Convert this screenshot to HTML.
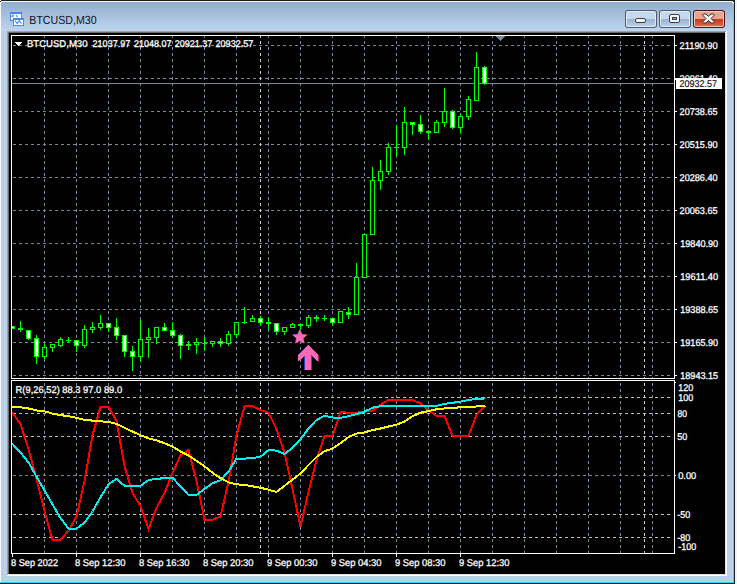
<!DOCTYPE html>
<html><head><meta charset="utf-8"><title>BTCUSD,M30</title>
<style>html,body{margin:0;padding:0;background:#fff;overflow:hidden}svg{display:block}
text{shape-rendering:auto}polygon{shape-rendering:geometricPrecision}polyline{shape-rendering:crispEdges}</style></head>
<body><svg width="737" height="584" viewBox="0 0 737 584" shape-rendering="crispEdges"><defs>
<linearGradient id="frameg" x1="0" y1="0" x2="0" y2="1" gradientUnits="objectBoundingBox">
<stop offset="0" stop-color="#96b1cf"/>
<stop offset="0.05" stop-color="#bbd3ed"/>
<stop offset="1" stop-color="#bbd1ea"/>
</linearGradient>
<linearGradient id="titleg" x1="0" y1="2" x2="0" y2="31" gradientUnits="userSpaceOnUse">
<stop offset="0" stop-color="#93aecc"/>
<stop offset="1" stop-color="#bdd5ef"/>
</linearGradient>
<linearGradient id="btnb" x1="0" y1="0" x2="0" y2="1">
<stop offset="0" stop-color="#98b1cf"/>
<stop offset="1" stop-color="#b8cee8"/>
</linearGradient>
<linearGradient id="btnr" x1="0" y1="0" x2="0" y2="1">
<stop offset="0" stop-color="#c0391a"/>
<stop offset="1" stop-color="#d9674a"/>
</linearGradient>
<clipPath id="indclip"><rect x="12" y="381" width="662" height="172"/></clipPath>
</defs><rect x="0" y="0" width="737" height="584" fill="#ffffff"/>
<path d="M0,3 Q0,0 3,0 L732,0 Q735,0 735,3 L735,584 L0,584 Z" fill="#1b1b1b"/>
<path d="M0,4 Q0,1 3,1 L731,1 Q734,1 734,4 L734,583 L0,583 Z" fill="#f4f8fc"/>
<path d="M1,4 Q1,2 4,2 L730,2 Q733,2 733,4 L733,582 L1,582 Z" fill="#35d3ef"/>
<path d="M1,4 Q1,2 4,2 L730,2 Q733,2 733,4 L733,582 L1,582 Z" fill="url(#frameg)"/>
<rect x="735" y="0" width="2" height="584" fill="#f4f4f4"/>
<rect x="734" y="0" width="1" height="583" fill="#1b1b1b"/>
<rect x="733" y="4" width="1" height="579" fill="#47d6f2"/>
<rect x="0" y="583" width="735" height="1" fill="#1b1b1b"/>
<rect x="0" y="582" width="734" height="1" fill="#2fd4ee"/>
<rect x="0" y="3" width="1" height="579" fill="#f6f9fd"/>
<rect x="1" y="31" width="6" height="551" fill="#b9d1ea"/>
<rect x="727" y="31" width="6" height="551" fill="#bcd0ea"/>
<rect x="1" y="576" width="732" height="6" fill="#bad0ea"/>
<path d="M1,4 Q1,2 4,2 L730,2 Q733,2 733,4 L733,31 L1,31 Z" fill="url(#titleg)"/>
<g>
<rect x="10" y="12" width="12" height="9" fill="#4a86ee"/>
<rect x="11" y="14" width="10" height="6" fill="#ffffff"/>
<path d="M11.5,17 L13,15.2 L14,16.5 M16,15.2 L17.5,17" stroke="#4a86ee" stroke-width="1.2" fill="none" shape-rendering="geometricPrecision"/>
<rect x="13" y="18" width="11" height="8" fill="#4a86ee"/>
<rect x="14" y="20" width="9" height="5" fill="#ffffff"/>
<path d="M15,20.6 L17.2,23.6 L19.2,20.6 L21.5,23.6" stroke="#4a86ee" stroke-width="1.1" fill="none" shape-rendering="geometricPrecision"/>
</g>
<text x="29.3" y="23.6" font-family='"Liberation Sans", sans-serif' font-size="11.8" text-rendering="geometricPrecision" fill="#10102a" textLength="67.3" lengthAdjust="spacingAndGlyphs">BTCUSD,M30</text>
<g shape-rendering="geometricPrecision"><rect x="625" y="10" width="32" height="18" rx="3" ry="3" fill="#4e5b6d"/><rect x="626" y="11" width="30" height="16" rx="2" ry="2" fill="#e3ecf7"/><rect x="627" y="12" width="28" height="7" fill="#c6d8ed"/><rect x="627" y="19" width="28" height="7" fill="url(#btnb)"/></g>
<g shape-rendering="geometricPrecision"><rect x="659" y="10" width="32" height="18" rx="3" ry="3" fill="#4e5b6d"/><rect x="660" y="11" width="30" height="16" rx="2" ry="2" fill="#e3ecf7"/><rect x="661" y="12" width="28" height="7" fill="#c6d8ed"/><rect x="661" y="19" width="28" height="7" fill="url(#btnb)"/></g>
<g shape-rendering="geometricPrecision"><rect x="693" y="10" width="32" height="18" rx="3" ry="3" fill="#4d1010"/><rect x="694" y="11" width="30" height="16" rx="2" ry="2" fill="#f3c9bb"/><rect x="695" y="12" width="28" height="7" fill="#e8a491"/><rect x="695" y="19" width="28" height="7" fill="url(#btnr)"/></g>
<g shape-rendering="geometricPrecision">
<rect x="635.5" y="18.5" width="10" height="4" rx="1.5" fill="#f4f4f4" stroke="#39414f" stroke-width="1"/>
<rect x="669.5" y="14.5" width="10" height="8" rx="1.5" fill="#f4f4f4" stroke="#39414f" stroke-width="1"/>
<rect x="672.5" y="17.5" width="4" height="2" fill="#8fa6c2" stroke="#39414f" stroke-width="1"/>
<path d="M703.5,14 L706,14 L708.5,16.5 L711,14 L713.5,14 L714.5,15 L711,18.5 L714.5,22 L713.5,23 L711,23 L708.5,20.5 L706,23 L703.5,23 L702.5,22 L706,18.5 L702.5,15 Z" fill="#fafafa" stroke="#3e2626" stroke-width="1" stroke-linejoin="round"/>
</g>
<rect x="7" y="31" width="720" height="545" fill="#ffffff"/>
<rect x="7" y="31" width="719" height="544" fill="#e3e3e3"/>
<rect x="7" y="31" width="719" height="1" fill="#a0a0a0"/>
<rect x="7" y="31" width="1" height="544" fill="#a0a0a0"/>
<rect x="8" y="32" width="717" height="542" fill="#696969"/>
<rect x="9" y="33" width="716" height="541" fill="#e3e3e3"/>
<rect x="9" y="33" width="716" height="541" fill="#000000"/>
<path d="M13,45.5H16M19,45.5H22M25,45.5H28M31,45.5H34M37,45.5H40M43,45.5H46M49,45.5H52M55,45.5H58M61,45.5H64M67,45.5H70M73,45.5H76M79,45.5H82M85,45.5H88M91,45.5H94M97,45.5H100M103,45.5H106M109,45.5H112M115,45.5H118M121,45.5H124M127,45.5H130M133,45.5H136M139,45.5H142M145,45.5H148M151,45.5H154M157,45.5H160M163,45.5H166M169,45.5H172M175,45.5H178M181,45.5H184M187,45.5H190M193,45.5H196M199,45.5H202M205,45.5H208M211,45.5H214M217,45.5H220M223,45.5H226M229,45.5H232M235,45.5H238M241,45.5H244M247,45.5H250M253,45.5H256M259,45.5H262M265,45.5H268M271,45.5H274M277,45.5H280M283,45.5H286M289,45.5H292M295,45.5H298M301,45.5H304M307,45.5H310M313,45.5H316M319,45.5H322M325,45.5H328M331,45.5H334M337,45.5H340M343,45.5H346M349,45.5H352M355,45.5H358M361,45.5H364M367,45.5H370M373,45.5H376M379,45.5H382M385,45.5H388M391,45.5H394M397,45.5H400M403,45.5H406M409,45.5H412M415,45.5H418M421,45.5H424M427,45.5H430M433,45.5H436M439,45.5H442M445,45.5H448M451,45.5H454M457,45.5H460M463,45.5H466M469,45.5H472M475,45.5H478M481,45.5H484M487,45.5H490M493,45.5H496M499,45.5H502M505,45.5H508M511,45.5H514M517,45.5H520M523,45.5H526M529,45.5H532M535,45.5H538M541,45.5H544M547,45.5H550M553,45.5H556M559,45.5H562M565,45.5H568M571,45.5H574M577,45.5H580M583,45.5H586M589,45.5H592M595,45.5H598M601,45.5H604M607,45.5H610M613,45.5H616M619,45.5H622M625,45.5H628M631,45.5H634M637,45.5H640M643,45.5H646M649,45.5H652M655,45.5H658M661,45.5H664M667,45.5H670" stroke="#778899" stroke-width="1" fill="none"/>
<path d="M13,78.5H16M19,78.5H22M25,78.5H28M31,78.5H34M37,78.5H40M43,78.5H46M49,78.5H52M55,78.5H58M61,78.5H64M67,78.5H70M73,78.5H76M79,78.5H82M85,78.5H88M91,78.5H94M97,78.5H100M103,78.5H106M109,78.5H112M115,78.5H118M121,78.5H124M127,78.5H130M133,78.5H136M139,78.5H142M145,78.5H148M151,78.5H154M157,78.5H160M163,78.5H166M169,78.5H172M175,78.5H178M181,78.5H184M187,78.5H190M193,78.5H196M199,78.5H202M205,78.5H208M211,78.5H214M217,78.5H220M223,78.5H226M229,78.5H232M235,78.5H238M241,78.5H244M247,78.5H250M253,78.5H256M259,78.5H262M265,78.5H268M271,78.5H274M277,78.5H280M283,78.5H286M289,78.5H292M295,78.5H298M301,78.5H304M307,78.5H310M313,78.5H316M319,78.5H322M325,78.5H328M331,78.5H334M337,78.5H340M343,78.5H346M349,78.5H352M355,78.5H358M361,78.5H364M367,78.5H370M373,78.5H376M379,78.5H382M385,78.5H388M391,78.5H394M397,78.5H400M403,78.5H406M409,78.5H412M415,78.5H418M421,78.5H424M427,78.5H430M433,78.5H436M439,78.5H442M445,78.5H448M451,78.5H454M457,78.5H460M463,78.5H466M469,78.5H472M475,78.5H478M481,78.5H484M487,78.5H490M493,78.5H496M499,78.5H502M505,78.5H508M511,78.5H514M517,78.5H520M523,78.5H526M529,78.5H532M535,78.5H538M541,78.5H544M547,78.5H550M553,78.5H556M559,78.5H562M565,78.5H568M571,78.5H574M577,78.5H580M583,78.5H586M589,78.5H592M595,78.5H598M601,78.5H604M607,78.5H610M613,78.5H616M619,78.5H622M625,78.5H628M631,78.5H634M637,78.5H640M643,78.5H646M649,78.5H652M655,78.5H658M661,78.5H664M667,78.5H670" stroke="#778899" stroke-width="1" fill="none"/>
<path d="M13,111.5H16M19,111.5H22M25,111.5H28M31,111.5H34M37,111.5H40M43,111.5H46M49,111.5H52M55,111.5H58M61,111.5H64M67,111.5H70M73,111.5H76M79,111.5H82M85,111.5H88M91,111.5H94M97,111.5H100M103,111.5H106M109,111.5H112M115,111.5H118M121,111.5H124M127,111.5H130M133,111.5H136M139,111.5H142M145,111.5H148M151,111.5H154M157,111.5H160M163,111.5H166M169,111.5H172M175,111.5H178M181,111.5H184M187,111.5H190M193,111.5H196M199,111.5H202M205,111.5H208M211,111.5H214M217,111.5H220M223,111.5H226M229,111.5H232M235,111.5H238M241,111.5H244M247,111.5H250M253,111.5H256M259,111.5H262M265,111.5H268M271,111.5H274M277,111.5H280M283,111.5H286M289,111.5H292M295,111.5H298M301,111.5H304M307,111.5H310M313,111.5H316M319,111.5H322M325,111.5H328M331,111.5H334M337,111.5H340M343,111.5H346M349,111.5H352M355,111.5H358M361,111.5H364M367,111.5H370M373,111.5H376M379,111.5H382M385,111.5H388M391,111.5H394M397,111.5H400M403,111.5H406M409,111.5H412M415,111.5H418M421,111.5H424M427,111.5H430M433,111.5H436M439,111.5H442M445,111.5H448M451,111.5H454M457,111.5H460M463,111.5H466M469,111.5H472M475,111.5H478M481,111.5H484M487,111.5H490M493,111.5H496M499,111.5H502M505,111.5H508M511,111.5H514M517,111.5H520M523,111.5H526M529,111.5H532M535,111.5H538M541,111.5H544M547,111.5H550M553,111.5H556M559,111.5H562M565,111.5H568M571,111.5H574M577,111.5H580M583,111.5H586M589,111.5H592M595,111.5H598M601,111.5H604M607,111.5H610M613,111.5H616M619,111.5H622M625,111.5H628M631,111.5H634M637,111.5H640M643,111.5H646M649,111.5H652M655,111.5H658M661,111.5H664M667,111.5H670" stroke="#778899" stroke-width="1" fill="none"/>
<path d="M13,144.5H16M19,144.5H22M25,144.5H28M31,144.5H34M37,144.5H40M43,144.5H46M49,144.5H52M55,144.5H58M61,144.5H64M67,144.5H70M73,144.5H76M79,144.5H82M85,144.5H88M91,144.5H94M97,144.5H100M103,144.5H106M109,144.5H112M115,144.5H118M121,144.5H124M127,144.5H130M133,144.5H136M139,144.5H142M145,144.5H148M151,144.5H154M157,144.5H160M163,144.5H166M169,144.5H172M175,144.5H178M181,144.5H184M187,144.5H190M193,144.5H196M199,144.5H202M205,144.5H208M211,144.5H214M217,144.5H220M223,144.5H226M229,144.5H232M235,144.5H238M241,144.5H244M247,144.5H250M253,144.5H256M259,144.5H262M265,144.5H268M271,144.5H274M277,144.5H280M283,144.5H286M289,144.5H292M295,144.5H298M301,144.5H304M307,144.5H310M313,144.5H316M319,144.5H322M325,144.5H328M331,144.5H334M337,144.5H340M343,144.5H346M349,144.5H352M355,144.5H358M361,144.5H364M367,144.5H370M373,144.5H376M379,144.5H382M385,144.5H388M391,144.5H394M397,144.5H400M403,144.5H406M409,144.5H412M415,144.5H418M421,144.5H424M427,144.5H430M433,144.5H436M439,144.5H442M445,144.5H448M451,144.5H454M457,144.5H460M463,144.5H466M469,144.5H472M475,144.5H478M481,144.5H484M487,144.5H490M493,144.5H496M499,144.5H502M505,144.5H508M511,144.5H514M517,144.5H520M523,144.5H526M529,144.5H532M535,144.5H538M541,144.5H544M547,144.5H550M553,144.5H556M559,144.5H562M565,144.5H568M571,144.5H574M577,144.5H580M583,144.5H586M589,144.5H592M595,144.5H598M601,144.5H604M607,144.5H610M613,144.5H616M619,144.5H622M625,144.5H628M631,144.5H634M637,144.5H640M643,144.5H646M649,144.5H652M655,144.5H658M661,144.5H664M667,144.5H670" stroke="#778899" stroke-width="1" fill="none"/>
<path d="M13,177.5H16M19,177.5H22M25,177.5H28M31,177.5H34M37,177.5H40M43,177.5H46M49,177.5H52M55,177.5H58M61,177.5H64M67,177.5H70M73,177.5H76M79,177.5H82M85,177.5H88M91,177.5H94M97,177.5H100M103,177.5H106M109,177.5H112M115,177.5H118M121,177.5H124M127,177.5H130M133,177.5H136M139,177.5H142M145,177.5H148M151,177.5H154M157,177.5H160M163,177.5H166M169,177.5H172M175,177.5H178M181,177.5H184M187,177.5H190M193,177.5H196M199,177.5H202M205,177.5H208M211,177.5H214M217,177.5H220M223,177.5H226M229,177.5H232M235,177.5H238M241,177.5H244M247,177.5H250M253,177.5H256M259,177.5H262M265,177.5H268M271,177.5H274M277,177.5H280M283,177.5H286M289,177.5H292M295,177.5H298M301,177.5H304M307,177.5H310M313,177.5H316M319,177.5H322M325,177.5H328M331,177.5H334M337,177.5H340M343,177.5H346M349,177.5H352M355,177.5H358M361,177.5H364M367,177.5H370M373,177.5H376M379,177.5H382M385,177.5H388M391,177.5H394M397,177.5H400M403,177.5H406M409,177.5H412M415,177.5H418M421,177.5H424M427,177.5H430M433,177.5H436M439,177.5H442M445,177.5H448M451,177.5H454M457,177.5H460M463,177.5H466M469,177.5H472M475,177.5H478M481,177.5H484M487,177.5H490M493,177.5H496M499,177.5H502M505,177.5H508M511,177.5H514M517,177.5H520M523,177.5H526M529,177.5H532M535,177.5H538M541,177.5H544M547,177.5H550M553,177.5H556M559,177.5H562M565,177.5H568M571,177.5H574M577,177.5H580M583,177.5H586M589,177.5H592M595,177.5H598M601,177.5H604M607,177.5H610M613,177.5H616M619,177.5H622M625,177.5H628M631,177.5H634M637,177.5H640M643,177.5H646M649,177.5H652M655,177.5H658M661,177.5H664M667,177.5H670" stroke="#778899" stroke-width="1" fill="none"/>
<path d="M13,210.5H16M19,210.5H22M25,210.5H28M31,210.5H34M37,210.5H40M43,210.5H46M49,210.5H52M55,210.5H58M61,210.5H64M67,210.5H70M73,210.5H76M79,210.5H82M85,210.5H88M91,210.5H94M97,210.5H100M103,210.5H106M109,210.5H112M115,210.5H118M121,210.5H124M127,210.5H130M133,210.5H136M139,210.5H142M145,210.5H148M151,210.5H154M157,210.5H160M163,210.5H166M169,210.5H172M175,210.5H178M181,210.5H184M187,210.5H190M193,210.5H196M199,210.5H202M205,210.5H208M211,210.5H214M217,210.5H220M223,210.5H226M229,210.5H232M235,210.5H238M241,210.5H244M247,210.5H250M253,210.5H256M259,210.5H262M265,210.5H268M271,210.5H274M277,210.5H280M283,210.5H286M289,210.5H292M295,210.5H298M301,210.5H304M307,210.5H310M313,210.5H316M319,210.5H322M325,210.5H328M331,210.5H334M337,210.5H340M343,210.5H346M349,210.5H352M355,210.5H358M361,210.5H364M367,210.5H370M373,210.5H376M379,210.5H382M385,210.5H388M391,210.5H394M397,210.5H400M403,210.5H406M409,210.5H412M415,210.5H418M421,210.5H424M427,210.5H430M433,210.5H436M439,210.5H442M445,210.5H448M451,210.5H454M457,210.5H460M463,210.5H466M469,210.5H472M475,210.5H478M481,210.5H484M487,210.5H490M493,210.5H496M499,210.5H502M505,210.5H508M511,210.5H514M517,210.5H520M523,210.5H526M529,210.5H532M535,210.5H538M541,210.5H544M547,210.5H550M553,210.5H556M559,210.5H562M565,210.5H568M571,210.5H574M577,210.5H580M583,210.5H586M589,210.5H592M595,210.5H598M601,210.5H604M607,210.5H610M613,210.5H616M619,210.5H622M625,210.5H628M631,210.5H634M637,210.5H640M643,210.5H646M649,210.5H652M655,210.5H658M661,210.5H664M667,210.5H670" stroke="#778899" stroke-width="1" fill="none"/>
<path d="M13,243.5H16M19,243.5H22M25,243.5H28M31,243.5H34M37,243.5H40M43,243.5H46M49,243.5H52M55,243.5H58M61,243.5H64M67,243.5H70M73,243.5H76M79,243.5H82M85,243.5H88M91,243.5H94M97,243.5H100M103,243.5H106M109,243.5H112M115,243.5H118M121,243.5H124M127,243.5H130M133,243.5H136M139,243.5H142M145,243.5H148M151,243.5H154M157,243.5H160M163,243.5H166M169,243.5H172M175,243.5H178M181,243.5H184M187,243.5H190M193,243.5H196M199,243.5H202M205,243.5H208M211,243.5H214M217,243.5H220M223,243.5H226M229,243.5H232M235,243.5H238M241,243.5H244M247,243.5H250M253,243.5H256M259,243.5H262M265,243.5H268M271,243.5H274M277,243.5H280M283,243.5H286M289,243.5H292M295,243.5H298M301,243.5H304M307,243.5H310M313,243.5H316M319,243.5H322M325,243.5H328M331,243.5H334M337,243.5H340M343,243.5H346M349,243.5H352M355,243.5H358M361,243.5H364M367,243.5H370M373,243.5H376M379,243.5H382M385,243.5H388M391,243.5H394M397,243.5H400M403,243.5H406M409,243.5H412M415,243.5H418M421,243.5H424M427,243.5H430M433,243.5H436M439,243.5H442M445,243.5H448M451,243.5H454M457,243.5H460M463,243.5H466M469,243.5H472M475,243.5H478M481,243.5H484M487,243.5H490M493,243.5H496M499,243.5H502M505,243.5H508M511,243.5H514M517,243.5H520M523,243.5H526M529,243.5H532M535,243.5H538M541,243.5H544M547,243.5H550M553,243.5H556M559,243.5H562M565,243.5H568M571,243.5H574M577,243.5H580M583,243.5H586M589,243.5H592M595,243.5H598M601,243.5H604M607,243.5H610M613,243.5H616M619,243.5H622M625,243.5H628M631,243.5H634M637,243.5H640M643,243.5H646M649,243.5H652M655,243.5H658M661,243.5H664M667,243.5H670" stroke="#778899" stroke-width="1" fill="none"/>
<path d="M13,276.5H16M19,276.5H22M25,276.5H28M31,276.5H34M37,276.5H40M43,276.5H46M49,276.5H52M55,276.5H58M61,276.5H64M67,276.5H70M73,276.5H76M79,276.5H82M85,276.5H88M91,276.5H94M97,276.5H100M103,276.5H106M109,276.5H112M115,276.5H118M121,276.5H124M127,276.5H130M133,276.5H136M139,276.5H142M145,276.5H148M151,276.5H154M157,276.5H160M163,276.5H166M169,276.5H172M175,276.5H178M181,276.5H184M187,276.5H190M193,276.5H196M199,276.5H202M205,276.5H208M211,276.5H214M217,276.5H220M223,276.5H226M229,276.5H232M235,276.5H238M241,276.5H244M247,276.5H250M253,276.5H256M259,276.5H262M265,276.5H268M271,276.5H274M277,276.5H280M283,276.5H286M289,276.5H292M295,276.5H298M301,276.5H304M307,276.5H310M313,276.5H316M319,276.5H322M325,276.5H328M331,276.5H334M337,276.5H340M343,276.5H346M349,276.5H352M355,276.5H358M361,276.5H364M367,276.5H370M373,276.5H376M379,276.5H382M385,276.5H388M391,276.5H394M397,276.5H400M403,276.5H406M409,276.5H412M415,276.5H418M421,276.5H424M427,276.5H430M433,276.5H436M439,276.5H442M445,276.5H448M451,276.5H454M457,276.5H460M463,276.5H466M469,276.5H472M475,276.5H478M481,276.5H484M487,276.5H490M493,276.5H496M499,276.5H502M505,276.5H508M511,276.5H514M517,276.5H520M523,276.5H526M529,276.5H532M535,276.5H538M541,276.5H544M547,276.5H550M553,276.5H556M559,276.5H562M565,276.5H568M571,276.5H574M577,276.5H580M583,276.5H586M589,276.5H592M595,276.5H598M601,276.5H604M607,276.5H610M613,276.5H616M619,276.5H622M625,276.5H628M631,276.5H634M637,276.5H640M643,276.5H646M649,276.5H652M655,276.5H658M661,276.5H664M667,276.5H670" stroke="#778899" stroke-width="1" fill="none"/>
<path d="M13,309.5H16M19,309.5H22M25,309.5H28M31,309.5H34M37,309.5H40M43,309.5H46M49,309.5H52M55,309.5H58M61,309.5H64M67,309.5H70M73,309.5H76M79,309.5H82M85,309.5H88M91,309.5H94M97,309.5H100M103,309.5H106M109,309.5H112M115,309.5H118M121,309.5H124M127,309.5H130M133,309.5H136M139,309.5H142M145,309.5H148M151,309.5H154M157,309.5H160M163,309.5H166M169,309.5H172M175,309.5H178M181,309.5H184M187,309.5H190M193,309.5H196M199,309.5H202M205,309.5H208M211,309.5H214M217,309.5H220M223,309.5H226M229,309.5H232M235,309.5H238M241,309.5H244M247,309.5H250M253,309.5H256M259,309.5H262M265,309.5H268M271,309.5H274M277,309.5H280M283,309.5H286M289,309.5H292M295,309.5H298M301,309.5H304M307,309.5H310M313,309.5H316M319,309.5H322M325,309.5H328M331,309.5H334M337,309.5H340M343,309.5H346M349,309.5H352M355,309.5H358M361,309.5H364M367,309.5H370M373,309.5H376M379,309.5H382M385,309.5H388M391,309.5H394M397,309.5H400M403,309.5H406M409,309.5H412M415,309.5H418M421,309.5H424M427,309.5H430M433,309.5H436M439,309.5H442M445,309.5H448M451,309.5H454M457,309.5H460M463,309.5H466M469,309.5H472M475,309.5H478M481,309.5H484M487,309.5H490M493,309.5H496M499,309.5H502M505,309.5H508M511,309.5H514M517,309.5H520M523,309.5H526M529,309.5H532M535,309.5H538M541,309.5H544M547,309.5H550M553,309.5H556M559,309.5H562M565,309.5H568M571,309.5H574M577,309.5H580M583,309.5H586M589,309.5H592M595,309.5H598M601,309.5H604M607,309.5H610M613,309.5H616M619,309.5H622M625,309.5H628M631,309.5H634M637,309.5H640M643,309.5H646M649,309.5H652M655,309.5H658M661,309.5H664M667,309.5H670" stroke="#778899" stroke-width="1" fill="none"/>
<path d="M13,342.5H16M19,342.5H22M25,342.5H28M31,342.5H34M37,342.5H40M43,342.5H46M49,342.5H52M55,342.5H58M61,342.5H64M67,342.5H70M73,342.5H76M79,342.5H82M85,342.5H88M91,342.5H94M97,342.5H100M103,342.5H106M109,342.5H112M115,342.5H118M121,342.5H124M127,342.5H130M133,342.5H136M139,342.5H142M145,342.5H148M151,342.5H154M157,342.5H160M163,342.5H166M169,342.5H172M175,342.5H178M181,342.5H184M187,342.5H190M193,342.5H196M199,342.5H202M205,342.5H208M211,342.5H214M217,342.5H220M223,342.5H226M229,342.5H232M235,342.5H238M241,342.5H244M247,342.5H250M253,342.5H256M259,342.5H262M265,342.5H268M271,342.5H274M277,342.5H280M283,342.5H286M289,342.5H292M295,342.5H298M301,342.5H304M307,342.5H310M313,342.5H316M319,342.5H322M325,342.5H328M331,342.5H334M337,342.5H340M343,342.5H346M349,342.5H352M355,342.5H358M361,342.5H364M367,342.5H370M373,342.5H376M379,342.5H382M385,342.5H388M391,342.5H394M397,342.5H400M403,342.5H406M409,342.5H412M415,342.5H418M421,342.5H424M427,342.5H430M433,342.5H436M439,342.5H442M445,342.5H448M451,342.5H454M457,342.5H460M463,342.5H466M469,342.5H472M475,342.5H478M481,342.5H484M487,342.5H490M493,342.5H496M499,342.5H502M505,342.5H508M511,342.5H514M517,342.5H520M523,342.5H526M529,342.5H532M535,342.5H538M541,342.5H544M547,342.5H550M553,342.5H556M559,342.5H562M565,342.5H568M571,342.5H574M577,342.5H580M583,342.5H586M589,342.5H592M595,342.5H598M601,342.5H604M607,342.5H610M613,342.5H616M619,342.5H622M625,342.5H628M631,342.5H634M637,342.5H640M643,342.5H646M649,342.5H652M655,342.5H658M661,342.5H664M667,342.5H670" stroke="#778899" stroke-width="1" fill="none"/>
<path d="M13,375.5H16M19,375.5H22M25,375.5H28M31,375.5H34M37,375.5H40M43,375.5H46M49,375.5H52M55,375.5H58M61,375.5H64M67,375.5H70M73,375.5H76M79,375.5H82M85,375.5H88M91,375.5H94M97,375.5H100M103,375.5H106M109,375.5H112M115,375.5H118M121,375.5H124M127,375.5H130M133,375.5H136M139,375.5H142M145,375.5H148M151,375.5H154M157,375.5H160M163,375.5H166M169,375.5H172M175,375.5H178M181,375.5H184M187,375.5H190M193,375.5H196M199,375.5H202M205,375.5H208M211,375.5H214M217,375.5H220M223,375.5H226M229,375.5H232M235,375.5H238M241,375.5H244M247,375.5H250M253,375.5H256M259,375.5H262M265,375.5H268M271,375.5H274M277,375.5H280M283,375.5H286M289,375.5H292M295,375.5H298M301,375.5H304M307,375.5H310M313,375.5H316M319,375.5H322M325,375.5H328M331,375.5H334M337,375.5H340M343,375.5H346M349,375.5H352M355,375.5H358M361,375.5H364M367,375.5H370M373,375.5H376M379,375.5H382M385,375.5H388M391,375.5H394M397,375.5H400M403,375.5H406M409,375.5H412M415,375.5H418M421,375.5H424M427,375.5H430M433,375.5H436M439,375.5H442M445,375.5H448M451,375.5H454M457,375.5H460M463,375.5H466M469,375.5H472M475,375.5H478M481,375.5H484M487,375.5H490M493,375.5H496M499,375.5H502M505,375.5H508M511,375.5H514M517,375.5H520M523,375.5H526M529,375.5H532M535,375.5H538M541,375.5H544M547,375.5H550M553,375.5H556M559,375.5H562M565,375.5H568M571,375.5H574M577,375.5H580M583,375.5H586M589,375.5H592M595,375.5H598M601,375.5H604M607,375.5H610M613,375.5H616M619,375.5H622M625,375.5H628M631,375.5H634M637,375.5H640M643,375.5H646M649,375.5H652M655,375.5H658M661,375.5H664M667,375.5H670" stroke="#778899" stroke-width="1" fill="none"/>
<path d="M44.5,36V38M44.5,41V44M44.5,47V50M44.5,53V56M44.5,59V62M44.5,65V68M44.5,71V74M44.5,77V80M44.5,83V86M44.5,89V92M44.5,95V98M44.5,101V104M44.5,107V110M44.5,113V116M44.5,119V122M44.5,125V128M44.5,131V134M44.5,137V140M44.5,143V146M44.5,149V152M44.5,155V158M44.5,161V164M44.5,167V170M44.5,173V176M44.5,179V182M44.5,185V188M44.5,191V194M44.5,197V200M44.5,203V206M44.5,209V212M44.5,215V218M44.5,221V224M44.5,227V230M44.5,233V236M44.5,239V242M44.5,245V248M44.5,251V254M44.5,257V260M44.5,263V266M44.5,269V272M44.5,275V278M44.5,281V284M44.5,287V290M44.5,293V296M44.5,299V302M44.5,305V308M44.5,311V314M44.5,317V320M44.5,323V326M44.5,329V332M44.5,335V338M44.5,341V344M44.5,347V350M44.5,353V356M44.5,359V362M44.5,365V368M44.5,371V374M44.5,377V378" stroke="#778899" stroke-width="1" fill="none"/>
<path d="M76.5,36V38M76.5,41V44M76.5,47V50M76.5,53V56M76.5,59V62M76.5,65V68M76.5,71V74M76.5,77V80M76.5,83V86M76.5,89V92M76.5,95V98M76.5,101V104M76.5,107V110M76.5,113V116M76.5,119V122M76.5,125V128M76.5,131V134M76.5,137V140M76.5,143V146M76.5,149V152M76.5,155V158M76.5,161V164M76.5,167V170M76.5,173V176M76.5,179V182M76.5,185V188M76.5,191V194M76.5,197V200M76.5,203V206M76.5,209V212M76.5,215V218M76.5,221V224M76.5,227V230M76.5,233V236M76.5,239V242M76.5,245V248M76.5,251V254M76.5,257V260M76.5,263V266M76.5,269V272M76.5,275V278M76.5,281V284M76.5,287V290M76.5,293V296M76.5,299V302M76.5,305V308M76.5,311V314M76.5,317V320M76.5,323V326M76.5,329V332M76.5,335V338M76.5,341V344M76.5,347V350M76.5,353V356M76.5,359V362M76.5,365V368M76.5,371V374M76.5,377V378" stroke="#778899" stroke-width="1" fill="none"/>
<path d="M108.5,36V38M108.5,41V44M108.5,47V50M108.5,53V56M108.5,59V62M108.5,65V68M108.5,71V74M108.5,77V80M108.5,83V86M108.5,89V92M108.5,95V98M108.5,101V104M108.5,107V110M108.5,113V116M108.5,119V122M108.5,125V128M108.5,131V134M108.5,137V140M108.5,143V146M108.5,149V152M108.5,155V158M108.5,161V164M108.5,167V170M108.5,173V176M108.5,179V182M108.5,185V188M108.5,191V194M108.5,197V200M108.5,203V206M108.5,209V212M108.5,215V218M108.5,221V224M108.5,227V230M108.5,233V236M108.5,239V242M108.5,245V248M108.5,251V254M108.5,257V260M108.5,263V266M108.5,269V272M108.5,275V278M108.5,281V284M108.5,287V290M108.5,293V296M108.5,299V302M108.5,305V308M108.5,311V314M108.5,317V320M108.5,323V326M108.5,329V332M108.5,335V338M108.5,341V344M108.5,347V350M108.5,353V356M108.5,359V362M108.5,365V368M108.5,371V374M108.5,377V378" stroke="#778899" stroke-width="1" fill="none"/>
<path d="M140.5,36V38M140.5,41V44M140.5,47V50M140.5,53V56M140.5,59V62M140.5,65V68M140.5,71V74M140.5,77V80M140.5,83V86M140.5,89V92M140.5,95V98M140.5,101V104M140.5,107V110M140.5,113V116M140.5,119V122M140.5,125V128M140.5,131V134M140.5,137V140M140.5,143V146M140.5,149V152M140.5,155V158M140.5,161V164M140.5,167V170M140.5,173V176M140.5,179V182M140.5,185V188M140.5,191V194M140.5,197V200M140.5,203V206M140.5,209V212M140.5,215V218M140.5,221V224M140.5,227V230M140.5,233V236M140.5,239V242M140.5,245V248M140.5,251V254M140.5,257V260M140.5,263V266M140.5,269V272M140.5,275V278M140.5,281V284M140.5,287V290M140.5,293V296M140.5,299V302M140.5,305V308M140.5,311V314M140.5,317V320M140.5,323V326M140.5,329V332M140.5,335V338M140.5,341V344M140.5,347V350M140.5,353V356M140.5,359V362M140.5,365V368M140.5,371V374M140.5,377V378" stroke="#778899" stroke-width="1" fill="none"/>
<path d="M172.5,36V38M172.5,41V44M172.5,47V50M172.5,53V56M172.5,59V62M172.5,65V68M172.5,71V74M172.5,77V80M172.5,83V86M172.5,89V92M172.5,95V98M172.5,101V104M172.5,107V110M172.5,113V116M172.5,119V122M172.5,125V128M172.5,131V134M172.5,137V140M172.5,143V146M172.5,149V152M172.5,155V158M172.5,161V164M172.5,167V170M172.5,173V176M172.5,179V182M172.5,185V188M172.5,191V194M172.5,197V200M172.5,203V206M172.5,209V212M172.5,215V218M172.5,221V224M172.5,227V230M172.5,233V236M172.5,239V242M172.5,245V248M172.5,251V254M172.5,257V260M172.5,263V266M172.5,269V272M172.5,275V278M172.5,281V284M172.5,287V290M172.5,293V296M172.5,299V302M172.5,305V308M172.5,311V314M172.5,317V320M172.5,323V326M172.5,329V332M172.5,335V338M172.5,341V344M172.5,347V350M172.5,353V356M172.5,359V362M172.5,365V368M172.5,371V374M172.5,377V378" stroke="#778899" stroke-width="1" fill="none"/>
<path d="M204.5,36V38M204.5,41V44M204.5,47V50M204.5,53V56M204.5,59V62M204.5,65V68M204.5,71V74M204.5,77V80M204.5,83V86M204.5,89V92M204.5,95V98M204.5,101V104M204.5,107V110M204.5,113V116M204.5,119V122M204.5,125V128M204.5,131V134M204.5,137V140M204.5,143V146M204.5,149V152M204.5,155V158M204.5,161V164M204.5,167V170M204.5,173V176M204.5,179V182M204.5,185V188M204.5,191V194M204.5,197V200M204.5,203V206M204.5,209V212M204.5,215V218M204.5,221V224M204.5,227V230M204.5,233V236M204.5,239V242M204.5,245V248M204.5,251V254M204.5,257V260M204.5,263V266M204.5,269V272M204.5,275V278M204.5,281V284M204.5,287V290M204.5,293V296M204.5,299V302M204.5,305V308M204.5,311V314M204.5,317V320M204.5,323V326M204.5,329V332M204.5,335V338M204.5,341V344M204.5,347V350M204.5,353V356M204.5,359V362M204.5,365V368M204.5,371V374M204.5,377V378" stroke="#778899" stroke-width="1" fill="none"/>
<path d="M236.5,36V38M236.5,41V44M236.5,47V50M236.5,53V56M236.5,59V62M236.5,65V68M236.5,71V74M236.5,77V80M236.5,83V86M236.5,89V92M236.5,95V98M236.5,101V104M236.5,107V110M236.5,113V116M236.5,119V122M236.5,125V128M236.5,131V134M236.5,137V140M236.5,143V146M236.5,149V152M236.5,155V158M236.5,161V164M236.5,167V170M236.5,173V176M236.5,179V182M236.5,185V188M236.5,191V194M236.5,197V200M236.5,203V206M236.5,209V212M236.5,215V218M236.5,221V224M236.5,227V230M236.5,233V236M236.5,239V242M236.5,245V248M236.5,251V254M236.5,257V260M236.5,263V266M236.5,269V272M236.5,275V278M236.5,281V284M236.5,287V290M236.5,293V296M236.5,299V302M236.5,305V308M236.5,311V314M236.5,317V320M236.5,323V326M236.5,329V332M236.5,335V338M236.5,341V344M236.5,347V350M236.5,353V356M236.5,359V362M236.5,365V368M236.5,371V374M236.5,377V378" stroke="#778899" stroke-width="1" fill="none"/>
<path d="M268.5,36V38M268.5,41V44M268.5,47V50M268.5,53V56M268.5,59V62M268.5,65V68M268.5,71V74M268.5,77V80M268.5,83V86M268.5,89V92M268.5,95V98M268.5,101V104M268.5,107V110M268.5,113V116M268.5,119V122M268.5,125V128M268.5,131V134M268.5,137V140M268.5,143V146M268.5,149V152M268.5,155V158M268.5,161V164M268.5,167V170M268.5,173V176M268.5,179V182M268.5,185V188M268.5,191V194M268.5,197V200M268.5,203V206M268.5,209V212M268.5,215V218M268.5,221V224M268.5,227V230M268.5,233V236M268.5,239V242M268.5,245V248M268.5,251V254M268.5,257V260M268.5,263V266M268.5,269V272M268.5,275V278M268.5,281V284M268.5,287V290M268.5,293V296M268.5,299V302M268.5,305V308M268.5,311V314M268.5,317V320M268.5,323V326M268.5,329V332M268.5,335V338M268.5,341V344M268.5,347V350M268.5,353V356M268.5,359V362M268.5,365V368M268.5,371V374M268.5,377V378" stroke="#778899" stroke-width="1" fill="none"/>
<path d="M300.5,36V38M300.5,41V44M300.5,47V50M300.5,53V56M300.5,59V62M300.5,65V68M300.5,71V74M300.5,77V80M300.5,83V86M300.5,89V92M300.5,95V98M300.5,101V104M300.5,107V110M300.5,113V116M300.5,119V122M300.5,125V128M300.5,131V134M300.5,137V140M300.5,143V146M300.5,149V152M300.5,155V158M300.5,161V164M300.5,167V170M300.5,173V176M300.5,179V182M300.5,185V188M300.5,191V194M300.5,197V200M300.5,203V206M300.5,209V212M300.5,215V218M300.5,221V224M300.5,227V230M300.5,233V236M300.5,239V242M300.5,245V248M300.5,251V254M300.5,257V260M300.5,263V266M300.5,269V272M300.5,275V278M300.5,281V284M300.5,287V290M300.5,293V296M300.5,299V302M300.5,305V308M300.5,311V314M300.5,317V320M300.5,323V326M300.5,329V332M300.5,335V338M300.5,341V344M300.5,347V350M300.5,353V356M300.5,359V362M300.5,365V368M300.5,371V374M300.5,377V378" stroke="#778899" stroke-width="1" fill="none"/>
<path d="M332.5,36V38M332.5,41V44M332.5,47V50M332.5,53V56M332.5,59V62M332.5,65V68M332.5,71V74M332.5,77V80M332.5,83V86M332.5,89V92M332.5,95V98M332.5,101V104M332.5,107V110M332.5,113V116M332.5,119V122M332.5,125V128M332.5,131V134M332.5,137V140M332.5,143V146M332.5,149V152M332.5,155V158M332.5,161V164M332.5,167V170M332.5,173V176M332.5,179V182M332.5,185V188M332.5,191V194M332.5,197V200M332.5,203V206M332.5,209V212M332.5,215V218M332.5,221V224M332.5,227V230M332.5,233V236M332.5,239V242M332.5,245V248M332.5,251V254M332.5,257V260M332.5,263V266M332.5,269V272M332.5,275V278M332.5,281V284M332.5,287V290M332.5,293V296M332.5,299V302M332.5,305V308M332.5,311V314M332.5,317V320M332.5,323V326M332.5,329V332M332.5,335V338M332.5,341V344M332.5,347V350M332.5,353V356M332.5,359V362M332.5,365V368M332.5,371V374M332.5,377V378" stroke="#778899" stroke-width="1" fill="none"/>
<path d="M364.5,36V38M364.5,41V44M364.5,47V50M364.5,53V56M364.5,59V62M364.5,65V68M364.5,71V74M364.5,77V80M364.5,83V86M364.5,89V92M364.5,95V98M364.5,101V104M364.5,107V110M364.5,113V116M364.5,119V122M364.5,125V128M364.5,131V134M364.5,137V140M364.5,143V146M364.5,149V152M364.5,155V158M364.5,161V164M364.5,167V170M364.5,173V176M364.5,179V182M364.5,185V188M364.5,191V194M364.5,197V200M364.5,203V206M364.5,209V212M364.5,215V218M364.5,221V224M364.5,227V230M364.5,233V236M364.5,239V242M364.5,245V248M364.5,251V254M364.5,257V260M364.5,263V266M364.5,269V272M364.5,275V278M364.5,281V284M364.5,287V290M364.5,293V296M364.5,299V302M364.5,305V308M364.5,311V314M364.5,317V320M364.5,323V326M364.5,329V332M364.5,335V338M364.5,341V344M364.5,347V350M364.5,353V356M364.5,359V362M364.5,365V368M364.5,371V374M364.5,377V378" stroke="#778899" stroke-width="1" fill="none"/>
<path d="M396.5,36V38M396.5,41V44M396.5,47V50M396.5,53V56M396.5,59V62M396.5,65V68M396.5,71V74M396.5,77V80M396.5,83V86M396.5,89V92M396.5,95V98M396.5,101V104M396.5,107V110M396.5,113V116M396.5,119V122M396.5,125V128M396.5,131V134M396.5,137V140M396.5,143V146M396.5,149V152M396.5,155V158M396.5,161V164M396.5,167V170M396.5,173V176M396.5,179V182M396.5,185V188M396.5,191V194M396.5,197V200M396.5,203V206M396.5,209V212M396.5,215V218M396.5,221V224M396.5,227V230M396.5,233V236M396.5,239V242M396.5,245V248M396.5,251V254M396.5,257V260M396.5,263V266M396.5,269V272M396.5,275V278M396.5,281V284M396.5,287V290M396.5,293V296M396.5,299V302M396.5,305V308M396.5,311V314M396.5,317V320M396.5,323V326M396.5,329V332M396.5,335V338M396.5,341V344M396.5,347V350M396.5,353V356M396.5,359V362M396.5,365V368M396.5,371V374M396.5,377V378" stroke="#778899" stroke-width="1" fill="none"/>
<path d="M428.5,36V38M428.5,41V44M428.5,47V50M428.5,53V56M428.5,59V62M428.5,65V68M428.5,71V74M428.5,77V80M428.5,83V86M428.5,89V92M428.5,95V98M428.5,101V104M428.5,107V110M428.5,113V116M428.5,119V122M428.5,125V128M428.5,131V134M428.5,137V140M428.5,143V146M428.5,149V152M428.5,155V158M428.5,161V164M428.5,167V170M428.5,173V176M428.5,179V182M428.5,185V188M428.5,191V194M428.5,197V200M428.5,203V206M428.5,209V212M428.5,215V218M428.5,221V224M428.5,227V230M428.5,233V236M428.5,239V242M428.5,245V248M428.5,251V254M428.5,257V260M428.5,263V266M428.5,269V272M428.5,275V278M428.5,281V284M428.5,287V290M428.5,293V296M428.5,299V302M428.5,305V308M428.5,311V314M428.5,317V320M428.5,323V326M428.5,329V332M428.5,335V338M428.5,341V344M428.5,347V350M428.5,353V356M428.5,359V362M428.5,365V368M428.5,371V374M428.5,377V378" stroke="#778899" stroke-width="1" fill="none"/>
<path d="M460.5,36V38M460.5,41V44M460.5,47V50M460.5,53V56M460.5,59V62M460.5,65V68M460.5,71V74M460.5,77V80M460.5,83V86M460.5,89V92M460.5,95V98M460.5,101V104M460.5,107V110M460.5,113V116M460.5,119V122M460.5,125V128M460.5,131V134M460.5,137V140M460.5,143V146M460.5,149V152M460.5,155V158M460.5,161V164M460.5,167V170M460.5,173V176M460.5,179V182M460.5,185V188M460.5,191V194M460.5,197V200M460.5,203V206M460.5,209V212M460.5,215V218M460.5,221V224M460.5,227V230M460.5,233V236M460.5,239V242M460.5,245V248M460.5,251V254M460.5,257V260M460.5,263V266M460.5,269V272M460.5,275V278M460.5,281V284M460.5,287V290M460.5,293V296M460.5,299V302M460.5,305V308M460.5,311V314M460.5,317V320M460.5,323V326M460.5,329V332M460.5,335V338M460.5,341V344M460.5,347V350M460.5,353V356M460.5,359V362M460.5,365V368M460.5,371V374M460.5,377V378" stroke="#778899" stroke-width="1" fill="none"/>
<path d="M492.5,36V38M492.5,41V44M492.5,47V50M492.5,53V56M492.5,59V62M492.5,65V68M492.5,71V74M492.5,77V80M492.5,83V86M492.5,89V92M492.5,95V98M492.5,101V104M492.5,107V110M492.5,113V116M492.5,119V122M492.5,125V128M492.5,131V134M492.5,137V140M492.5,143V146M492.5,149V152M492.5,155V158M492.5,161V164M492.5,167V170M492.5,173V176M492.5,179V182M492.5,185V188M492.5,191V194M492.5,197V200M492.5,203V206M492.5,209V212M492.5,215V218M492.5,221V224M492.5,227V230M492.5,233V236M492.5,239V242M492.5,245V248M492.5,251V254M492.5,257V260M492.5,263V266M492.5,269V272M492.5,275V278M492.5,281V284M492.5,287V290M492.5,293V296M492.5,299V302M492.5,305V308M492.5,311V314M492.5,317V320M492.5,323V326M492.5,329V332M492.5,335V338M492.5,341V344M492.5,347V350M492.5,353V356M492.5,359V362M492.5,365V368M492.5,371V374M492.5,377V378" stroke="#778899" stroke-width="1" fill="none"/>
<path d="M524.5,36V38M524.5,41V44M524.5,47V50M524.5,53V56M524.5,59V62M524.5,65V68M524.5,71V74M524.5,77V80M524.5,83V86M524.5,89V92M524.5,95V98M524.5,101V104M524.5,107V110M524.5,113V116M524.5,119V122M524.5,125V128M524.5,131V134M524.5,137V140M524.5,143V146M524.5,149V152M524.5,155V158M524.5,161V164M524.5,167V170M524.5,173V176M524.5,179V182M524.5,185V188M524.5,191V194M524.5,197V200M524.5,203V206M524.5,209V212M524.5,215V218M524.5,221V224M524.5,227V230M524.5,233V236M524.5,239V242M524.5,245V248M524.5,251V254M524.5,257V260M524.5,263V266M524.5,269V272M524.5,275V278M524.5,281V284M524.5,287V290M524.5,293V296M524.5,299V302M524.5,305V308M524.5,311V314M524.5,317V320M524.5,323V326M524.5,329V332M524.5,335V338M524.5,341V344M524.5,347V350M524.5,353V356M524.5,359V362M524.5,365V368M524.5,371V374M524.5,377V378" stroke="#778899" stroke-width="1" fill="none"/>
<path d="M556.5,36V38M556.5,41V44M556.5,47V50M556.5,53V56M556.5,59V62M556.5,65V68M556.5,71V74M556.5,77V80M556.5,83V86M556.5,89V92M556.5,95V98M556.5,101V104M556.5,107V110M556.5,113V116M556.5,119V122M556.5,125V128M556.5,131V134M556.5,137V140M556.5,143V146M556.5,149V152M556.5,155V158M556.5,161V164M556.5,167V170M556.5,173V176M556.5,179V182M556.5,185V188M556.5,191V194M556.5,197V200M556.5,203V206M556.5,209V212M556.5,215V218M556.5,221V224M556.5,227V230M556.5,233V236M556.5,239V242M556.5,245V248M556.5,251V254M556.5,257V260M556.5,263V266M556.5,269V272M556.5,275V278M556.5,281V284M556.5,287V290M556.5,293V296M556.5,299V302M556.5,305V308M556.5,311V314M556.5,317V320M556.5,323V326M556.5,329V332M556.5,335V338M556.5,341V344M556.5,347V350M556.5,353V356M556.5,359V362M556.5,365V368M556.5,371V374M556.5,377V378" stroke="#778899" stroke-width="1" fill="none"/>
<path d="M588.5,36V38M588.5,41V44M588.5,47V50M588.5,53V56M588.5,59V62M588.5,65V68M588.5,71V74M588.5,77V80M588.5,83V86M588.5,89V92M588.5,95V98M588.5,101V104M588.5,107V110M588.5,113V116M588.5,119V122M588.5,125V128M588.5,131V134M588.5,137V140M588.5,143V146M588.5,149V152M588.5,155V158M588.5,161V164M588.5,167V170M588.5,173V176M588.5,179V182M588.5,185V188M588.5,191V194M588.5,197V200M588.5,203V206M588.5,209V212M588.5,215V218M588.5,221V224M588.5,227V230M588.5,233V236M588.5,239V242M588.5,245V248M588.5,251V254M588.5,257V260M588.5,263V266M588.5,269V272M588.5,275V278M588.5,281V284M588.5,287V290M588.5,293V296M588.5,299V302M588.5,305V308M588.5,311V314M588.5,317V320M588.5,323V326M588.5,329V332M588.5,335V338M588.5,341V344M588.5,347V350M588.5,353V356M588.5,359V362M588.5,365V368M588.5,371V374M588.5,377V378" stroke="#778899" stroke-width="1" fill="none"/>
<path d="M620.5,36V38M620.5,41V44M620.5,47V50M620.5,53V56M620.5,59V62M620.5,65V68M620.5,71V74M620.5,77V80M620.5,83V86M620.5,89V92M620.5,95V98M620.5,101V104M620.5,107V110M620.5,113V116M620.5,119V122M620.5,125V128M620.5,131V134M620.5,137V140M620.5,143V146M620.5,149V152M620.5,155V158M620.5,161V164M620.5,167V170M620.5,173V176M620.5,179V182M620.5,185V188M620.5,191V194M620.5,197V200M620.5,203V206M620.5,209V212M620.5,215V218M620.5,221V224M620.5,227V230M620.5,233V236M620.5,239V242M620.5,245V248M620.5,251V254M620.5,257V260M620.5,263V266M620.5,269V272M620.5,275V278M620.5,281V284M620.5,287V290M620.5,293V296M620.5,299V302M620.5,305V308M620.5,311V314M620.5,317V320M620.5,323V326M620.5,329V332M620.5,335V338M620.5,341V344M620.5,347V350M620.5,353V356M620.5,359V362M620.5,365V368M620.5,371V374M620.5,377V378" stroke="#778899" stroke-width="1" fill="none"/>
<path d="M652.5,36V38M652.5,41V44M652.5,47V50M652.5,53V56M652.5,59V62M652.5,65V68M652.5,71V74M652.5,77V80M652.5,83V86M652.5,89V92M652.5,95V98M652.5,101V104M652.5,107V110M652.5,113V116M652.5,119V122M652.5,125V128M652.5,131V134M652.5,137V140M652.5,143V146M652.5,149V152M652.5,155V158M652.5,161V164M652.5,167V170M652.5,173V176M652.5,179V182M652.5,185V188M652.5,191V194M652.5,197V200M652.5,203V206M652.5,209V212M652.5,215V218M652.5,221V224M652.5,227V230M652.5,233V236M652.5,239V242M652.5,245V248M652.5,251V254M652.5,257V260M652.5,263V266M652.5,269V272M652.5,275V278M652.5,281V284M652.5,287V290M652.5,293V296M652.5,299V302M652.5,305V308M652.5,311V314M652.5,317V320M652.5,323V326M652.5,329V332M652.5,335V338M652.5,341V344M652.5,347V350M652.5,353V356M652.5,359V362M652.5,365V368M652.5,371V374M652.5,377V378" stroke="#778899" stroke-width="1" fill="none"/>
<path d="M44.5,383V386M44.5,389V392M44.5,395V398M44.5,401V404M44.5,407V410M44.5,413V416M44.5,419V422M44.5,425V428M44.5,431V434M44.5,437V440M44.5,443V446M44.5,449V452M44.5,455V458M44.5,461V464M44.5,467V470M44.5,473V476M44.5,479V482M44.5,485V488M44.5,491V494M44.5,497V500M44.5,503V506M44.5,509V512M44.5,515V518M44.5,521V524M44.5,527V530M44.5,533V536M44.5,539V542M44.5,545V548M44.5,551V553" stroke="#778899" stroke-width="1" fill="none"/>
<path d="M76.5,383V386M76.5,389V392M76.5,395V398M76.5,401V404M76.5,407V410M76.5,413V416M76.5,419V422M76.5,425V428M76.5,431V434M76.5,437V440M76.5,443V446M76.5,449V452M76.5,455V458M76.5,461V464M76.5,467V470M76.5,473V476M76.5,479V482M76.5,485V488M76.5,491V494M76.5,497V500M76.5,503V506M76.5,509V512M76.5,515V518M76.5,521V524M76.5,527V530M76.5,533V536M76.5,539V542M76.5,545V548M76.5,551V553" stroke="#778899" stroke-width="1" fill="none"/>
<path d="M108.5,383V386M108.5,389V392M108.5,395V398M108.5,401V404M108.5,407V410M108.5,413V416M108.5,419V422M108.5,425V428M108.5,431V434M108.5,437V440M108.5,443V446M108.5,449V452M108.5,455V458M108.5,461V464M108.5,467V470M108.5,473V476M108.5,479V482M108.5,485V488M108.5,491V494M108.5,497V500M108.5,503V506M108.5,509V512M108.5,515V518M108.5,521V524M108.5,527V530M108.5,533V536M108.5,539V542M108.5,545V548M108.5,551V553" stroke="#778899" stroke-width="1" fill="none"/>
<path d="M140.5,383V386M140.5,389V392M140.5,395V398M140.5,401V404M140.5,407V410M140.5,413V416M140.5,419V422M140.5,425V428M140.5,431V434M140.5,437V440M140.5,443V446M140.5,449V452M140.5,455V458M140.5,461V464M140.5,467V470M140.5,473V476M140.5,479V482M140.5,485V488M140.5,491V494M140.5,497V500M140.5,503V506M140.5,509V512M140.5,515V518M140.5,521V524M140.5,527V530M140.5,533V536M140.5,539V542M140.5,545V548M140.5,551V553" stroke="#778899" stroke-width="1" fill="none"/>
<path d="M172.5,383V386M172.5,389V392M172.5,395V398M172.5,401V404M172.5,407V410M172.5,413V416M172.5,419V422M172.5,425V428M172.5,431V434M172.5,437V440M172.5,443V446M172.5,449V452M172.5,455V458M172.5,461V464M172.5,467V470M172.5,473V476M172.5,479V482M172.5,485V488M172.5,491V494M172.5,497V500M172.5,503V506M172.5,509V512M172.5,515V518M172.5,521V524M172.5,527V530M172.5,533V536M172.5,539V542M172.5,545V548M172.5,551V553" stroke="#778899" stroke-width="1" fill="none"/>
<path d="M204.5,383V386M204.5,389V392M204.5,395V398M204.5,401V404M204.5,407V410M204.5,413V416M204.5,419V422M204.5,425V428M204.5,431V434M204.5,437V440M204.5,443V446M204.5,449V452M204.5,455V458M204.5,461V464M204.5,467V470M204.5,473V476M204.5,479V482M204.5,485V488M204.5,491V494M204.5,497V500M204.5,503V506M204.5,509V512M204.5,515V518M204.5,521V524M204.5,527V530M204.5,533V536M204.5,539V542M204.5,545V548M204.5,551V553" stroke="#778899" stroke-width="1" fill="none"/>
<path d="M236.5,383V386M236.5,389V392M236.5,395V398M236.5,401V404M236.5,407V410M236.5,413V416M236.5,419V422M236.5,425V428M236.5,431V434M236.5,437V440M236.5,443V446M236.5,449V452M236.5,455V458M236.5,461V464M236.5,467V470M236.5,473V476M236.5,479V482M236.5,485V488M236.5,491V494M236.5,497V500M236.5,503V506M236.5,509V512M236.5,515V518M236.5,521V524M236.5,527V530M236.5,533V536M236.5,539V542M236.5,545V548M236.5,551V553" stroke="#778899" stroke-width="1" fill="none"/>
<path d="M268.5,383V386M268.5,389V392M268.5,395V398M268.5,401V404M268.5,407V410M268.5,413V416M268.5,419V422M268.5,425V428M268.5,431V434M268.5,437V440M268.5,443V446M268.5,449V452M268.5,455V458M268.5,461V464M268.5,467V470M268.5,473V476M268.5,479V482M268.5,485V488M268.5,491V494M268.5,497V500M268.5,503V506M268.5,509V512M268.5,515V518M268.5,521V524M268.5,527V530M268.5,533V536M268.5,539V542M268.5,545V548M268.5,551V553" stroke="#778899" stroke-width="1" fill="none"/>
<path d="M300.5,383V386M300.5,389V392M300.5,395V398M300.5,401V404M300.5,407V410M300.5,413V416M300.5,419V422M300.5,425V428M300.5,431V434M300.5,437V440M300.5,443V446M300.5,449V452M300.5,455V458M300.5,461V464M300.5,467V470M300.5,473V476M300.5,479V482M300.5,485V488M300.5,491V494M300.5,497V500M300.5,503V506M300.5,509V512M300.5,515V518M300.5,521V524M300.5,527V530M300.5,533V536M300.5,539V542M300.5,545V548M300.5,551V553" stroke="#778899" stroke-width="1" fill="none"/>
<path d="M332.5,383V386M332.5,389V392M332.5,395V398M332.5,401V404M332.5,407V410M332.5,413V416M332.5,419V422M332.5,425V428M332.5,431V434M332.5,437V440M332.5,443V446M332.5,449V452M332.5,455V458M332.5,461V464M332.5,467V470M332.5,473V476M332.5,479V482M332.5,485V488M332.5,491V494M332.5,497V500M332.5,503V506M332.5,509V512M332.5,515V518M332.5,521V524M332.5,527V530M332.5,533V536M332.5,539V542M332.5,545V548M332.5,551V553" stroke="#778899" stroke-width="1" fill="none"/>
<path d="M364.5,383V386M364.5,389V392M364.5,395V398M364.5,401V404M364.5,407V410M364.5,413V416M364.5,419V422M364.5,425V428M364.5,431V434M364.5,437V440M364.5,443V446M364.5,449V452M364.5,455V458M364.5,461V464M364.5,467V470M364.5,473V476M364.5,479V482M364.5,485V488M364.5,491V494M364.5,497V500M364.5,503V506M364.5,509V512M364.5,515V518M364.5,521V524M364.5,527V530M364.5,533V536M364.5,539V542M364.5,545V548M364.5,551V553" stroke="#778899" stroke-width="1" fill="none"/>
<path d="M396.5,383V386M396.5,389V392M396.5,395V398M396.5,401V404M396.5,407V410M396.5,413V416M396.5,419V422M396.5,425V428M396.5,431V434M396.5,437V440M396.5,443V446M396.5,449V452M396.5,455V458M396.5,461V464M396.5,467V470M396.5,473V476M396.5,479V482M396.5,485V488M396.5,491V494M396.5,497V500M396.5,503V506M396.5,509V512M396.5,515V518M396.5,521V524M396.5,527V530M396.5,533V536M396.5,539V542M396.5,545V548M396.5,551V553" stroke="#778899" stroke-width="1" fill="none"/>
<path d="M428.5,383V386M428.5,389V392M428.5,395V398M428.5,401V404M428.5,407V410M428.5,413V416M428.5,419V422M428.5,425V428M428.5,431V434M428.5,437V440M428.5,443V446M428.5,449V452M428.5,455V458M428.5,461V464M428.5,467V470M428.5,473V476M428.5,479V482M428.5,485V488M428.5,491V494M428.5,497V500M428.5,503V506M428.5,509V512M428.5,515V518M428.5,521V524M428.5,527V530M428.5,533V536M428.5,539V542M428.5,545V548M428.5,551V553" stroke="#778899" stroke-width="1" fill="none"/>
<path d="M460.5,383V386M460.5,389V392M460.5,395V398M460.5,401V404M460.5,407V410M460.5,413V416M460.5,419V422M460.5,425V428M460.5,431V434M460.5,437V440M460.5,443V446M460.5,449V452M460.5,455V458M460.5,461V464M460.5,467V470M460.5,473V476M460.5,479V482M460.5,485V488M460.5,491V494M460.5,497V500M460.5,503V506M460.5,509V512M460.5,515V518M460.5,521V524M460.5,527V530M460.5,533V536M460.5,539V542M460.5,545V548M460.5,551V553" stroke="#778899" stroke-width="1" fill="none"/>
<path d="M492.5,383V386M492.5,389V392M492.5,395V398M492.5,401V404M492.5,407V410M492.5,413V416M492.5,419V422M492.5,425V428M492.5,431V434M492.5,437V440M492.5,443V446M492.5,449V452M492.5,455V458M492.5,461V464M492.5,467V470M492.5,473V476M492.5,479V482M492.5,485V488M492.5,491V494M492.5,497V500M492.5,503V506M492.5,509V512M492.5,515V518M492.5,521V524M492.5,527V530M492.5,533V536M492.5,539V542M492.5,545V548M492.5,551V553" stroke="#778899" stroke-width="1" fill="none"/>
<path d="M524.5,383V386M524.5,389V392M524.5,395V398M524.5,401V404M524.5,407V410M524.5,413V416M524.5,419V422M524.5,425V428M524.5,431V434M524.5,437V440M524.5,443V446M524.5,449V452M524.5,455V458M524.5,461V464M524.5,467V470M524.5,473V476M524.5,479V482M524.5,485V488M524.5,491V494M524.5,497V500M524.5,503V506M524.5,509V512M524.5,515V518M524.5,521V524M524.5,527V530M524.5,533V536M524.5,539V542M524.5,545V548M524.5,551V553" stroke="#778899" stroke-width="1" fill="none"/>
<path d="M556.5,383V386M556.5,389V392M556.5,395V398M556.5,401V404M556.5,407V410M556.5,413V416M556.5,419V422M556.5,425V428M556.5,431V434M556.5,437V440M556.5,443V446M556.5,449V452M556.5,455V458M556.5,461V464M556.5,467V470M556.5,473V476M556.5,479V482M556.5,485V488M556.5,491V494M556.5,497V500M556.5,503V506M556.5,509V512M556.5,515V518M556.5,521V524M556.5,527V530M556.5,533V536M556.5,539V542M556.5,545V548M556.5,551V553" stroke="#778899" stroke-width="1" fill="none"/>
<path d="M588.5,383V386M588.5,389V392M588.5,395V398M588.5,401V404M588.5,407V410M588.5,413V416M588.5,419V422M588.5,425V428M588.5,431V434M588.5,437V440M588.5,443V446M588.5,449V452M588.5,455V458M588.5,461V464M588.5,467V470M588.5,473V476M588.5,479V482M588.5,485V488M588.5,491V494M588.5,497V500M588.5,503V506M588.5,509V512M588.5,515V518M588.5,521V524M588.5,527V530M588.5,533V536M588.5,539V542M588.5,545V548M588.5,551V553" stroke="#778899" stroke-width="1" fill="none"/>
<path d="M620.5,383V386M620.5,389V392M620.5,395V398M620.5,401V404M620.5,407V410M620.5,413V416M620.5,419V422M620.5,425V428M620.5,431V434M620.5,437V440M620.5,443V446M620.5,449V452M620.5,455V458M620.5,461V464M620.5,467V470M620.5,473V476M620.5,479V482M620.5,485V488M620.5,491V494M620.5,497V500M620.5,503V506M620.5,509V512M620.5,515V518M620.5,521V524M620.5,527V530M620.5,533V536M620.5,539V542M620.5,545V548M620.5,551V553" stroke="#778899" stroke-width="1" fill="none"/>
<path d="M652.5,383V386M652.5,389V392M652.5,395V398M652.5,401V404M652.5,407V410M652.5,413V416M652.5,419V422M652.5,425V428M652.5,431V434M652.5,437V440M652.5,443V446M652.5,449V452M652.5,455V458M652.5,461V464M652.5,467V470M652.5,473V476M652.5,479V482M652.5,485V488M652.5,491V494M652.5,497V500M652.5,503V506M652.5,509V512M652.5,515V518M652.5,521V524M652.5,527V530M652.5,533V536M652.5,539V542M652.5,545V548M652.5,551V553" stroke="#778899" stroke-width="1" fill="none"/>
<path d="M13,475.5H16M19,475.5H22M25,475.5H28M31,475.5H34M37,475.5H40M43,475.5H46M49,475.5H52M55,475.5H58M61,475.5H64M67,475.5H70M73,475.5H76M79,475.5H82M85,475.5H88M91,475.5H94M97,475.5H100M103,475.5H106M109,475.5H112M115,475.5H118M121,475.5H124M127,475.5H130M133,475.5H136M139,475.5H142M145,475.5H148M151,475.5H154M157,475.5H160M163,475.5H166M169,475.5H172M175,475.5H178M181,475.5H184M187,475.5H190M193,475.5H196M199,475.5H202M205,475.5H208M211,475.5H214M217,475.5H220M223,475.5H226M229,475.5H232M235,475.5H238M241,475.5H244M247,475.5H250M253,475.5H256M259,475.5H262M265,475.5H268M271,475.5H274M277,475.5H280M283,475.5H286M289,475.5H292M295,475.5H298M301,475.5H304M307,475.5H310M313,475.5H316M319,475.5H322M325,475.5H328M331,475.5H334M337,475.5H340M343,475.5H346M349,475.5H352M355,475.5H358M361,475.5H364M367,475.5H370M373,475.5H376M379,475.5H382M385,475.5H388M391,475.5H394M397,475.5H400M403,475.5H406M409,475.5H412M415,475.5H418M421,475.5H424M427,475.5H430M433,475.5H436M439,475.5H442M445,475.5H448M451,475.5H454M457,475.5H460M463,475.5H466M469,475.5H472M475,475.5H478M481,475.5H484M487,475.5H490M493,475.5H496M499,475.5H502M505,475.5H508M511,475.5H514M517,475.5H520M523,475.5H526M529,475.5H532M535,475.5H538M541,475.5H544M547,475.5H550M553,475.5H556M559,475.5H562M565,475.5H568M571,475.5H574M577,475.5H580M583,475.5H586M589,475.5H592M595,475.5H598M601,475.5H604M607,475.5H610M613,475.5H616M619,475.5H622M625,475.5H628M631,475.5H634M637,475.5H640M643,475.5H646M649,475.5H652M655,475.5H658M661,475.5H664M667,475.5H670" stroke="#778899" stroke-width="1" fill="none"/>
<path d="M13,397.5H16M19,397.5H22M25,397.5H28M31,397.5H34M37,397.5H40M43,397.5H46M49,397.5H52M55,397.5H58M61,397.5H64M67,397.5H70M73,397.5H76M79,397.5H82M85,397.5H88M91,397.5H94M97,397.5H100M103,397.5H106M109,397.5H112M115,397.5H118M121,397.5H124M127,397.5H130M133,397.5H136M139,397.5H142M145,397.5H148M151,397.5H154M157,397.5H160M163,397.5H166M169,397.5H172M175,397.5H178M181,397.5H184M187,397.5H190M193,397.5H196M199,397.5H202M205,397.5H208M211,397.5H214M217,397.5H220M223,397.5H226M229,397.5H232M235,397.5H238M241,397.5H244M247,397.5H250M253,397.5H256M259,397.5H262M265,397.5H268M271,397.5H274M277,397.5H280M283,397.5H286M289,397.5H292M295,397.5H298M301,397.5H304M307,397.5H310M313,397.5H316M319,397.5H322M325,397.5H328M331,397.5H334M337,397.5H340M343,397.5H346M349,397.5H352M355,397.5H358M361,397.5H364M367,397.5H370M373,397.5H376M379,397.5H382M385,397.5H388M391,397.5H394M397,397.5H400M403,397.5H406M409,397.5H412M415,397.5H418M421,397.5H424M427,397.5H430M433,397.5H436M439,397.5H442M445,397.5H448M451,397.5H454M457,397.5H460M463,397.5H466M469,397.5H472M475,397.5H478M481,397.5H484M487,397.5H490M493,397.5H496M499,397.5H502M505,397.5H508M511,397.5H514M517,397.5H520M523,397.5H526M529,397.5H532M535,397.5H538M541,397.5H544M547,397.5H550M553,397.5H556M559,397.5H562M565,397.5H568M571,397.5H574M577,397.5H580M583,397.5H586M589,397.5H592M595,397.5H598M601,397.5H604M607,397.5H610M613,397.5H616M619,397.5H622M625,397.5H628M631,397.5H634M637,397.5H640M643,397.5H646M649,397.5H652M655,397.5H658M661,397.5H664M667,397.5H670" stroke="#c0c0c0" stroke-width="1" fill="none"/>
<path d="M13,413.5H16M19,413.5H22M25,413.5H28M31,413.5H34M37,413.5H40M43,413.5H46M49,413.5H52M55,413.5H58M61,413.5H64M67,413.5H70M73,413.5H76M79,413.5H82M85,413.5H88M91,413.5H94M97,413.5H100M103,413.5H106M109,413.5H112M115,413.5H118M121,413.5H124M127,413.5H130M133,413.5H136M139,413.5H142M145,413.5H148M151,413.5H154M157,413.5H160M163,413.5H166M169,413.5H172M175,413.5H178M181,413.5H184M187,413.5H190M193,413.5H196M199,413.5H202M205,413.5H208M211,413.5H214M217,413.5H220M223,413.5H226M229,413.5H232M235,413.5H238M241,413.5H244M247,413.5H250M253,413.5H256M259,413.5H262M265,413.5H268M271,413.5H274M277,413.5H280M283,413.5H286M289,413.5H292M295,413.5H298M301,413.5H304M307,413.5H310M313,413.5H316M319,413.5H322M325,413.5H328M331,413.5H334M337,413.5H340M343,413.5H346M349,413.5H352M355,413.5H358M361,413.5H364M367,413.5H370M373,413.5H376M379,413.5H382M385,413.5H388M391,413.5H394M397,413.5H400M403,413.5H406M409,413.5H412M415,413.5H418M421,413.5H424M427,413.5H430M433,413.5H436M439,413.5H442M445,413.5H448M451,413.5H454M457,413.5H460M463,413.5H466M469,413.5H472M475,413.5H478M481,413.5H484M487,413.5H490M493,413.5H496M499,413.5H502M505,413.5H508M511,413.5H514M517,413.5H520M523,413.5H526M529,413.5H532M535,413.5H538M541,413.5H544M547,413.5H550M553,413.5H556M559,413.5H562M565,413.5H568M571,413.5H574M577,413.5H580M583,413.5H586M589,413.5H592M595,413.5H598M601,413.5H604M607,413.5H610M613,413.5H616M619,413.5H622M625,413.5H628M631,413.5H634M637,413.5H640M643,413.5H646M649,413.5H652M655,413.5H658M661,413.5H664M667,413.5H670" stroke="#c0c0c0" stroke-width="1" fill="none"/>
<path d="M13,436.5H16M19,436.5H22M25,436.5H28M31,436.5H34M37,436.5H40M43,436.5H46M49,436.5H52M55,436.5H58M61,436.5H64M67,436.5H70M73,436.5H76M79,436.5H82M85,436.5H88M91,436.5H94M97,436.5H100M103,436.5H106M109,436.5H112M115,436.5H118M121,436.5H124M127,436.5H130M133,436.5H136M139,436.5H142M145,436.5H148M151,436.5H154M157,436.5H160M163,436.5H166M169,436.5H172M175,436.5H178M181,436.5H184M187,436.5H190M193,436.5H196M199,436.5H202M205,436.5H208M211,436.5H214M217,436.5H220M223,436.5H226M229,436.5H232M235,436.5H238M241,436.5H244M247,436.5H250M253,436.5H256M259,436.5H262M265,436.5H268M271,436.5H274M277,436.5H280M283,436.5H286M289,436.5H292M295,436.5H298M301,436.5H304M307,436.5H310M313,436.5H316M319,436.5H322M325,436.5H328M331,436.5H334M337,436.5H340M343,436.5H346M349,436.5H352M355,436.5H358M361,436.5H364M367,436.5H370M373,436.5H376M379,436.5H382M385,436.5H388M391,436.5H394M397,436.5H400M403,436.5H406M409,436.5H412M415,436.5H418M421,436.5H424M427,436.5H430M433,436.5H436M439,436.5H442M445,436.5H448M451,436.5H454M457,436.5H460M463,436.5H466M469,436.5H472M475,436.5H478M481,436.5H484M487,436.5H490M493,436.5H496M499,436.5H502M505,436.5H508M511,436.5H514M517,436.5H520M523,436.5H526M529,436.5H532M535,436.5H538M541,436.5H544M547,436.5H550M553,436.5H556M559,436.5H562M565,436.5H568M571,436.5H574M577,436.5H580M583,436.5H586M589,436.5H592M595,436.5H598M601,436.5H604M607,436.5H610M613,436.5H616M619,436.5H622M625,436.5H628M631,436.5H634M637,436.5H640M643,436.5H646M649,436.5H652M655,436.5H658M661,436.5H664M667,436.5H670" stroke="#c0c0c0" stroke-width="1" fill="none"/>
<path d="M13,514.5H16M19,514.5H22M25,514.5H28M31,514.5H34M37,514.5H40M43,514.5H46M49,514.5H52M55,514.5H58M61,514.5H64M67,514.5H70M73,514.5H76M79,514.5H82M85,514.5H88M91,514.5H94M97,514.5H100M103,514.5H106M109,514.5H112M115,514.5H118M121,514.5H124M127,514.5H130M133,514.5H136M139,514.5H142M145,514.5H148M151,514.5H154M157,514.5H160M163,514.5H166M169,514.5H172M175,514.5H178M181,514.5H184M187,514.5H190M193,514.5H196M199,514.5H202M205,514.5H208M211,514.5H214M217,514.5H220M223,514.5H226M229,514.5H232M235,514.5H238M241,514.5H244M247,514.5H250M253,514.5H256M259,514.5H262M265,514.5H268M271,514.5H274M277,514.5H280M283,514.5H286M289,514.5H292M295,514.5H298M301,514.5H304M307,514.5H310M313,514.5H316M319,514.5H322M325,514.5H328M331,514.5H334M337,514.5H340M343,514.5H346M349,514.5H352M355,514.5H358M361,514.5H364M367,514.5H370M373,514.5H376M379,514.5H382M385,514.5H388M391,514.5H394M397,514.5H400M403,514.5H406M409,514.5H412M415,514.5H418M421,514.5H424M427,514.5H430M433,514.5H436M439,514.5H442M445,514.5H448M451,514.5H454M457,514.5H460M463,514.5H466M469,514.5H472M475,514.5H478M481,514.5H484M487,514.5H490M493,514.5H496M499,514.5H502M505,514.5H508M511,514.5H514M517,514.5H520M523,514.5H526M529,514.5H532M535,514.5H538M541,514.5H544M547,514.5H550M553,514.5H556M559,514.5H562M565,514.5H568M571,514.5H574M577,514.5H580M583,514.5H586M589,514.5H592M595,514.5H598M601,514.5H604M607,514.5H610M613,514.5H616M619,514.5H622M625,514.5H628M631,514.5H634M637,514.5H640M643,514.5H646M649,514.5H652M655,514.5H658M661,514.5H664M667,514.5H670" stroke="#c0c0c0" stroke-width="1" fill="none"/>
<path d="M13,537.5H16M19,537.5H22M25,537.5H28M31,537.5H34M37,537.5H40M43,537.5H46M49,537.5H52M55,537.5H58M61,537.5H64M67,537.5H70M73,537.5H76M79,537.5H82M85,537.5H88M91,537.5H94M97,537.5H100M103,537.5H106M109,537.5H112M115,537.5H118M121,537.5H124M127,537.5H130M133,537.5H136M139,537.5H142M145,537.5H148M151,537.5H154M157,537.5H160M163,537.5H166M169,537.5H172M175,537.5H178M181,537.5H184M187,537.5H190M193,537.5H196M199,537.5H202M205,537.5H208M211,537.5H214M217,537.5H220M223,537.5H226M229,537.5H232M235,537.5H238M241,537.5H244M247,537.5H250M253,537.5H256M259,537.5H262M265,537.5H268M271,537.5H274M277,537.5H280M283,537.5H286M289,537.5H292M295,537.5H298M301,537.5H304M307,537.5H310M313,537.5H316M319,537.5H322M325,537.5H328M331,537.5H334M337,537.5H340M343,537.5H346M349,537.5H352M355,537.5H358M361,537.5H364M367,537.5H370M373,537.5H376M379,537.5H382M385,537.5H388M391,537.5H394M397,537.5H400M403,537.5H406M409,537.5H412M415,537.5H418M421,537.5H424M427,537.5H430M433,537.5H436M439,537.5H442M445,537.5H448M451,537.5H454M457,537.5H460M463,537.5H466M469,537.5H472M475,537.5H478M481,537.5H484M487,537.5H490M493,537.5H496M499,537.5H502M505,537.5H508M511,537.5H514M517,537.5H520M523,537.5H526M529,537.5H532M535,537.5H538M541,537.5H544M547,537.5H550M553,537.5H556M559,537.5H562M565,537.5H568M571,537.5H574M577,537.5H580M583,537.5H586M589,537.5H592M595,537.5H598M601,537.5H604M607,537.5H610M613,537.5H616M619,537.5H622M625,537.5H628M631,537.5H634M637,537.5H640M643,537.5H646M649,537.5H652M655,537.5H658M661,537.5H664M667,537.5H670" stroke="#c0c0c0" stroke-width="1" fill="none"/>
<path d="M260.5,36V38M260.5,41V44M260.5,47V50M260.5,53V56M260.5,59V62M260.5,65V68M260.5,71V74M260.5,77V80M260.5,83V86M260.5,89V92M260.5,95V98M260.5,101V104M260.5,107V110M260.5,113V116M260.5,119V122M260.5,125V128M260.5,131V134M260.5,137V140M260.5,143V146M260.5,149V152M260.5,155V158M260.5,161V164M260.5,167V170M260.5,173V176M260.5,179V182M260.5,185V188M260.5,191V194M260.5,197V200M260.5,203V206M260.5,209V212M260.5,215V218M260.5,221V224M260.5,227V230M260.5,233V236M260.5,239V242M260.5,245V248M260.5,251V254M260.5,257V260M260.5,263V266M260.5,269V272M260.5,275V278M260.5,281V284M260.5,287V290M260.5,293V296M260.5,299V302M260.5,305V308M260.5,311V314M260.5,317V320M260.5,323V326M260.5,329V332M260.5,335V338M260.5,341V344M260.5,347V350M260.5,353V356M260.5,359V362M260.5,365V368M260.5,371V374M260.5,377V378" stroke="#d0d0d0" stroke-width="1" fill="none"/>
<path d="M260.5,383V386M260.5,389V392M260.5,395V398M260.5,401V404M260.5,407V410M260.5,413V416M260.5,419V422M260.5,425V428M260.5,431V434M260.5,437V440M260.5,443V446M260.5,449V452M260.5,455V458M260.5,461V464M260.5,467V470M260.5,473V476M260.5,479V482M260.5,485V488M260.5,491V494M260.5,497V500M260.5,503V506M260.5,509V512M260.5,515V518M260.5,521V524M260.5,527V530M260.5,533V536M260.5,539V542M260.5,545V548M260.5,551V553" stroke="#d0d0d0" stroke-width="1" fill="none"/>
<path d="M644.5,36V38M644.5,41V44M644.5,47V50M644.5,53V56M644.5,59V62M644.5,65V68M644.5,71V74M644.5,77V80M644.5,83V86M644.5,89V92M644.5,95V98M644.5,101V104M644.5,107V110M644.5,113V116M644.5,119V122M644.5,125V128M644.5,131V134M644.5,137V140M644.5,143V146M644.5,149V152M644.5,155V158M644.5,161V164M644.5,167V170M644.5,173V176M644.5,179V182M644.5,185V188M644.5,191V194M644.5,197V200M644.5,203V206M644.5,209V212M644.5,215V218M644.5,221V224M644.5,227V230M644.5,233V236M644.5,239V242M644.5,245V248M644.5,251V254M644.5,257V260M644.5,263V266M644.5,269V272M644.5,275V278M644.5,281V284M644.5,287V290M644.5,293V296M644.5,299V302M644.5,305V308M644.5,311V314M644.5,317V320M644.5,323V326M644.5,329V332M644.5,335V338M644.5,341V344M644.5,347V350M644.5,353V356M644.5,359V362M644.5,365V368M644.5,371V374M644.5,377V378" stroke="#d0d0d0" stroke-width="1" fill="none"/>
<path d="M644.5,383V386M644.5,389V392M644.5,395V398M644.5,401V404M644.5,407V410M644.5,413V416M644.5,419V422M644.5,425V428M644.5,431V434M644.5,437V440M644.5,443V446M644.5,449V452M644.5,455V458M644.5,461V464M644.5,467V470M644.5,473V476M644.5,479V482M644.5,485V488M644.5,491V494M644.5,497V500M644.5,503V506M644.5,509V512M644.5,515V518M644.5,521V524M644.5,527V530M644.5,533V536M644.5,539V542M644.5,545V548M644.5,551V553" stroke="#d0d0d0" stroke-width="1" fill="none"/>
<rect x="11.5" y="35.5" width="663" height="343" fill="none" stroke="#ffffff" stroke-width="1"/>
<rect x="11.5" y="380.5" width="663" height="173" fill="none" stroke="#ffffff" stroke-width="1"/>
<path d="M495.5,36 L505.5,36 L500.5,41.5 Z" fill="#778899"/>
<rect x="675" y="45" width="2" height="1" fill="#ffffff"/>
<text x="679.6" y="48.5" font-family='"Liberation Sans", sans-serif' font-size="9.8" text-rendering="geometricPrecision" fill="#ffffff" stroke="#ffffff" stroke-width="0.3" textLength="38" lengthAdjust="spacingAndGlyphs">21190.90</text>
<rect x="675" y="78" width="2" height="1" fill="#ffffff"/>
<text x="679.6" y="81.5" font-family='"Liberation Sans", sans-serif' font-size="9.8" text-rendering="geometricPrecision" fill="#ffffff" stroke="#ffffff" stroke-width="0.3" textLength="38" lengthAdjust="spacingAndGlyphs">20961.40</text>
<rect x="675" y="111" width="2" height="1" fill="#ffffff"/>
<text x="679.6" y="114.5" font-family='"Liberation Sans", sans-serif' font-size="9.8" text-rendering="geometricPrecision" fill="#ffffff" stroke="#ffffff" stroke-width="0.3" textLength="38" lengthAdjust="spacingAndGlyphs">20738.65</text>
<rect x="675" y="144" width="2" height="1" fill="#ffffff"/>
<text x="679.6" y="147.5" font-family='"Liberation Sans", sans-serif' font-size="9.8" text-rendering="geometricPrecision" fill="#ffffff" stroke="#ffffff" stroke-width="0.3" textLength="38" lengthAdjust="spacingAndGlyphs">20515.90</text>
<rect x="675" y="177" width="2" height="1" fill="#ffffff"/>
<text x="679.6" y="180.5" font-family='"Liberation Sans", sans-serif' font-size="9.8" text-rendering="geometricPrecision" fill="#ffffff" stroke="#ffffff" stroke-width="0.3" textLength="38" lengthAdjust="spacingAndGlyphs">20286.40</text>
<rect x="675" y="210" width="2" height="1" fill="#ffffff"/>
<text x="679.6" y="213.5" font-family='"Liberation Sans", sans-serif' font-size="9.8" text-rendering="geometricPrecision" fill="#ffffff" stroke="#ffffff" stroke-width="0.3" textLength="38" lengthAdjust="spacingAndGlyphs">20063.65</text>
<rect x="675" y="243" width="2" height="1" fill="#ffffff"/>
<text x="680.2" y="246.5" font-family='"Liberation Sans", sans-serif' font-size="9.8" text-rendering="geometricPrecision" fill="#ffffff" stroke="#ffffff" stroke-width="0.3" textLength="38" lengthAdjust="spacingAndGlyphs">19840.90</text>
<rect x="675" y="276" width="2" height="1" fill="#ffffff"/>
<text x="680.2" y="279.5" font-family='"Liberation Sans", sans-serif' font-size="9.8" text-rendering="geometricPrecision" fill="#ffffff" stroke="#ffffff" stroke-width="0.3" textLength="38" lengthAdjust="spacingAndGlyphs">19611.40</text>
<rect x="675" y="309" width="2" height="1" fill="#ffffff"/>
<text x="680.2" y="312.5" font-family='"Liberation Sans", sans-serif' font-size="9.8" text-rendering="geometricPrecision" fill="#ffffff" stroke="#ffffff" stroke-width="0.3" textLength="38" lengthAdjust="spacingAndGlyphs">19388.65</text>
<rect x="675" y="342" width="2" height="1" fill="#ffffff"/>
<text x="680.2" y="345.5" font-family='"Liberation Sans", sans-serif' font-size="9.8" text-rendering="geometricPrecision" fill="#ffffff" stroke="#ffffff" stroke-width="0.3" textLength="38" lengthAdjust="spacingAndGlyphs">19165.90</text>
<rect x="675" y="375" width="2" height="1" fill="#ffffff"/>
<text x="680.2" y="378.5" font-family='"Liberation Sans", sans-serif' font-size="9.8" text-rendering="geometricPrecision" fill="#ffffff" stroke="#ffffff" stroke-width="0.3" textLength="38" lengthAdjust="spacingAndGlyphs">18943.15</text>
<text x="678.2" y="391.0" font-family='"Liberation Sans", sans-serif' font-size="9.8" text-rendering="geometricPrecision" fill="#ffffff" stroke="#ffffff" stroke-width="0.3" textLength="15" lengthAdjust="spacingAndGlyphs">120</text>
<text x="678.2" y="400.5" font-family='"Liberation Sans", sans-serif' font-size="9.8" text-rendering="geometricPrecision" fill="#ffffff" stroke="#ffffff" stroke-width="0.3" textLength="15" lengthAdjust="spacingAndGlyphs">100</text>
<text x="677.6" y="416.5" font-family='"Liberation Sans", sans-serif' font-size="9.8" text-rendering="geometricPrecision" fill="#ffffff" stroke="#ffffff" stroke-width="0.3" textLength="9.5" lengthAdjust="spacingAndGlyphs">80</text>
<text x="677.3" y="439.5" font-family='"Liberation Sans", sans-serif' font-size="9.8" text-rendering="geometricPrecision" fill="#ffffff" stroke="#ffffff" stroke-width="0.3" textLength="10" lengthAdjust="spacingAndGlyphs">50</text>
<text x="678.2" y="478.5" font-family='"Liberation Sans", sans-serif' font-size="9.8" text-rendering="geometricPrecision" fill="#ffffff" stroke="#ffffff" stroke-width="0.3" textLength="18" lengthAdjust="spacingAndGlyphs">0.00</text>
<text x="677.3" y="517.5" font-family='"Liberation Sans", sans-serif' font-size="9.8" text-rendering="geometricPrecision" fill="#ffffff" stroke="#ffffff" stroke-width="0.3" textLength="13" lengthAdjust="spacingAndGlyphs">-50</text>
<text x="677.3" y="540.5" font-family='"Liberation Sans", sans-serif' font-size="9.8" text-rendering="geometricPrecision" fill="#ffffff" stroke="#ffffff" stroke-width="0.3" textLength="13" lengthAdjust="spacingAndGlyphs">-80</text>
<text x="678.2" y="550.0" font-family='"Liberation Sans", sans-serif' font-size="9.8" text-rendering="geometricPrecision" fill="#ffffff" stroke="#ffffff" stroke-width="0.3" textLength="18" lengthAdjust="spacingAndGlyphs">-100</text>
<rect x="675" y="382" width="1" height="1" fill="#ffffff"/>
<rect x="675" y="475" width="1" height="1" fill="#ffffff"/>
<rect x="12" y="554" width="1" height="3" fill="#ffffff"/>
<text x="11" y="566.3" font-family='"Liberation Sans", sans-serif' font-size="9.8" text-rendering="geometricPrecision" fill="#ffffff" stroke="#ffffff" stroke-width="0.3" textLength="47" lengthAdjust="spacingAndGlyphs">8 Sep 2022</text>
<rect x="76" y="554" width="1" height="3" fill="#ffffff"/>
<text x="75" y="566.3" font-family='"Liberation Sans", sans-serif' font-size="9.8" text-rendering="geometricPrecision" fill="#ffffff" stroke="#ffffff" stroke-width="0.3" textLength="50.5" lengthAdjust="spacingAndGlyphs">8 Sep 12:30</text>
<rect x="140" y="554" width="1" height="3" fill="#ffffff"/>
<text x="139" y="566.3" font-family='"Liberation Sans", sans-serif' font-size="9.8" text-rendering="geometricPrecision" fill="#ffffff" stroke="#ffffff" stroke-width="0.3" textLength="50.5" lengthAdjust="spacingAndGlyphs">8 Sep 16:30</text>
<rect x="204" y="554" width="1" height="3" fill="#ffffff"/>
<text x="203" y="566.3" font-family='"Liberation Sans", sans-serif' font-size="9.8" text-rendering="geometricPrecision" fill="#ffffff" stroke="#ffffff" stroke-width="0.3" textLength="50.5" lengthAdjust="spacingAndGlyphs">8 Sep 20:30</text>
<rect x="268" y="554" width="1" height="3" fill="#ffffff"/>
<text x="267" y="566.3" font-family='"Liberation Sans", sans-serif' font-size="9.8" text-rendering="geometricPrecision" fill="#ffffff" stroke="#ffffff" stroke-width="0.3" textLength="50.5" lengthAdjust="spacingAndGlyphs">9 Sep 00:30</text>
<rect x="332" y="554" width="1" height="3" fill="#ffffff"/>
<text x="331" y="566.3" font-family='"Liberation Sans", sans-serif' font-size="9.8" text-rendering="geometricPrecision" fill="#ffffff" stroke="#ffffff" stroke-width="0.3" textLength="50.5" lengthAdjust="spacingAndGlyphs">9 Sep 04:30</text>
<rect x="396" y="554" width="1" height="3" fill="#ffffff"/>
<text x="395" y="566.3" font-family='"Liberation Sans", sans-serif' font-size="9.8" text-rendering="geometricPrecision" fill="#ffffff" stroke="#ffffff" stroke-width="0.3" textLength="50.5" lengthAdjust="spacingAndGlyphs">9 Sep 08:30</text>
<rect x="460" y="554" width="1" height="3" fill="#ffffff"/>
<text x="459" y="566.3" font-family='"Liberation Sans", sans-serif' font-size="9.8" text-rendering="geometricPrecision" fill="#ffffff" stroke="#ffffff" stroke-width="0.3" textLength="50.5" lengthAdjust="spacingAndGlyphs">9 Sep 12:30</text>
<path d="M15,42 L22,42 L18.5,46 Z" fill="#ffffff"/>
<text x="27" y="47" font-family='"Liberation Sans", sans-serif' font-size="9.8" text-rendering="geometricPrecision" fill="#ffffff" stroke="#ffffff" stroke-width="0.3" textLength="60.5" lengthAdjust="spacingAndGlyphs">BTCUSD,M30</text>
<text x="92.6" y="47" font-family='"Liberation Sans", sans-serif' font-size="9.8" text-rendering="geometricPrecision" fill="#ffffff" stroke="#ffffff" stroke-width="0.3" textLength="37.6" lengthAdjust="spacingAndGlyphs">21037.97</text>
<text x="133.9" y="47" font-family='"Liberation Sans", sans-serif' font-size="9.8" text-rendering="geometricPrecision" fill="#ffffff" stroke="#ffffff" stroke-width="0.3" textLength="37.6" lengthAdjust="spacingAndGlyphs">21048.07</text>
<text x="174.8" y="47" font-family='"Liberation Sans", sans-serif' font-size="9.8" text-rendering="geometricPrecision" fill="#ffffff" stroke="#ffffff" stroke-width="0.3" textLength="37.6" lengthAdjust="spacingAndGlyphs">20921.37</text>
<text x="215.6" y="47" font-family='"Liberation Sans", sans-serif' font-size="9.8" text-rendering="geometricPrecision" fill="#ffffff" stroke="#ffffff" stroke-width="0.3" textLength="37.6" lengthAdjust="spacingAndGlyphs">20932.57</text>
<text x="15.6" y="393.4" font-family='"Liberation Sans", sans-serif' font-size="9.8" text-rendering="geometricPrecision" fill="#ffffff" stroke="#ffffff" stroke-width="0.3" textLength="106.5" lengthAdjust="spacingAndGlyphs">R(9,26,52) 88.3 97.0 89.0</text>
<rect x="12" y="83" width="662" height="1" fill="#778899"/>
<g><rect x="12" y="326" width="1" height="3" fill="#00ff00"/><rect x="12" y="326" width="3" height="3" fill="#00ff00"/><rect x="12" y="327" width="2" height="1" fill="#ffffff"/><rect x="20" y="321" width="1" height="11" fill="#00ff00"/><rect x="18" y="328" width="5" height="2" fill="#00ff00"/><rect x="28" y="330" width="1" height="10" fill="#00ff00"/><rect x="26" y="330" width="5" height="9" fill="#00ff00"/><rect x="27" y="331" width="3" height="7" fill="#ffffff"/><rect x="36" y="335" width="1" height="29" fill="#00ff00"/><rect x="34" y="338" width="5" height="19" fill="#00ff00"/><rect x="35" y="339" width="3" height="17" fill="#ffffff"/><rect x="44" y="344" width="1" height="15" fill="#00ff00"/><rect x="42" y="347" width="5" height="10" fill="#00ff00"/><rect x="43" y="348" width="3" height="8" fill="#000000"/><rect x="52" y="344" width="1" height="8" fill="#00ff00"/><rect x="50" y="344" width="5" height="4" fill="#00ff00"/><rect x="51" y="345" width="3" height="2" fill="#000000"/><rect x="60" y="337" width="1" height="10" fill="#00ff00"/><rect x="58" y="339" width="5" height="7" fill="#00ff00"/><rect x="59" y="340" width="3" height="5" fill="#000000"/><rect x="68" y="337" width="1" height="6" fill="#00ff00"/><rect x="66" y="340" width="5" height="1" fill="#00ff00"/><rect x="76" y="340" width="1" height="12" fill="#00ff00"/><rect x="74" y="340" width="5" height="6" fill="#00ff00"/><rect x="75" y="341" width="3" height="4" fill="#ffffff"/><rect x="84" y="325" width="1" height="23" fill="#00ff00"/><rect x="82" y="329" width="5" height="17" fill="#00ff00"/><rect x="83" y="330" width="3" height="15" fill="#000000"/><rect x="92" y="322" width="1" height="11" fill="#00ff00"/><rect x="90" y="327" width="5" height="3" fill="#00ff00"/><rect x="91" y="328" width="3" height="1" fill="#000000"/><rect x="100" y="315" width="1" height="15" fill="#00ff00"/><rect x="98" y="323" width="5" height="5" fill="#00ff00"/><rect x="99" y="324" width="3" height="3" fill="#000000"/><rect x="108" y="323" width="1" height="9" fill="#00ff00"/><rect x="106" y="323" width="5" height="5" fill="#00ff00"/><rect x="107" y="324" width="3" height="3" fill="#ffffff"/><rect x="116" y="318" width="1" height="22" fill="#00ff00"/><rect x="114" y="327" width="5" height="9" fill="#00ff00"/><rect x="115" y="328" width="3" height="7" fill="#ffffff"/><rect x="124" y="335" width="1" height="22" fill="#00ff00"/><rect x="122" y="335" width="5" height="17" fill="#00ff00"/><rect x="123" y="336" width="3" height="15" fill="#ffffff"/><rect x="132" y="346" width="1" height="25" fill="#00ff00"/><rect x="130" y="351" width="5" height="6" fill="#00ff00"/><rect x="131" y="352" width="3" height="4" fill="#ffffff"/><rect x="140" y="320" width="1" height="42" fill="#00ff00"/><rect x="138" y="339" width="5" height="18" fill="#00ff00"/><rect x="139" y="340" width="3" height="16" fill="#000000"/><rect x="148" y="328" width="1" height="30" fill="#00ff00"/><rect x="146" y="337" width="5" height="3" fill="#00ff00"/><rect x="147" y="338" width="3" height="1" fill="#000000"/><rect x="156" y="327" width="1" height="17" fill="#00ff00"/><rect x="154" y="327" width="5" height="11" fill="#00ff00"/><rect x="155" y="328" width="3" height="9" fill="#000000"/><rect x="164" y="323" width="1" height="8" fill="#00ff00"/><rect x="162" y="327" width="5" height="4" fill="#00ff00"/><rect x="163" y="328" width="3" height="2" fill="#ffffff"/><rect x="172" y="322" width="1" height="16" fill="#00ff00"/><rect x="170" y="330" width="5" height="6" fill="#00ff00"/><rect x="171" y="331" width="3" height="4" fill="#ffffff"/><rect x="180" y="334" width="1" height="25" fill="#00ff00"/><rect x="178" y="335" width="5" height="11" fill="#00ff00"/><rect x="179" y="336" width="3" height="9" fill="#ffffff"/><rect x="188" y="341" width="1" height="9" fill="#00ff00"/><rect x="186" y="344" width="5" height="2" fill="#00ff00"/><rect x="196" y="338" width="1" height="16" fill="#00ff00"/><rect x="194" y="342" width="5" height="3" fill="#00ff00"/><rect x="195" y="343" width="3" height="1" fill="#000000"/><rect x="204" y="337" width="1" height="14" fill="#00ff00"/><rect x="202" y="343" width="5" height="1" fill="#00ff00"/><rect x="212" y="341" width="1" height="6" fill="#00ff00"/><rect x="210" y="341" width="5" height="3" fill="#00ff00"/><rect x="211" y="342" width="3" height="1" fill="#000000"/><rect x="220" y="338" width="1" height="9" fill="#00ff00"/><rect x="218" y="341" width="5" height="3" fill="#00ff00"/><rect x="219" y="342" width="3" height="1" fill="#ffffff"/><rect x="228" y="331" width="1" height="15" fill="#00ff00"/><rect x="226" y="334" width="5" height="10" fill="#00ff00"/><rect x="227" y="335" width="3" height="8" fill="#000000"/><rect x="236" y="322" width="1" height="16" fill="#00ff00"/><rect x="234" y="322" width="5" height="13" fill="#00ff00"/><rect x="235" y="323" width="3" height="11" fill="#000000"/><rect x="244" y="307" width="1" height="17" fill="#00ff00"/><rect x="242" y="322" width="5" height="1" fill="#00ff00"/><rect x="252" y="315" width="1" height="7" fill="#00ff00"/><rect x="250" y="318" width="5" height="4" fill="#00ff00"/><rect x="251" y="319" width="3" height="2" fill="#000000"/><rect x="260" y="316" width="1" height="10" fill="#00ff00"/><rect x="258" y="318" width="5" height="5" fill="#00ff00"/><rect x="259" y="319" width="3" height="3" fill="#ffffff"/><rect x="268" y="318" width="1" height="12" fill="#00ff00"/><rect x="266" y="322" width="5" height="2" fill="#00ff00"/><rect x="276" y="323" width="1" height="12" fill="#00ff00"/><rect x="274" y="323" width="5" height="9" fill="#00ff00"/><rect x="275" y="324" width="3" height="7" fill="#ffffff"/><rect x="284" y="327" width="1" height="8" fill="#00ff00"/><rect x="282" y="327" width="5" height="5" fill="#00ff00"/><rect x="283" y="328" width="3" height="3" fill="#000000"/><rect x="292" y="323" width="1" height="5" fill="#00ff00"/><rect x="290" y="324" width="5" height="4" fill="#00ff00"/><rect x="291" y="325" width="3" height="2" fill="#000000"/><rect x="300" y="324" width="1" height="7" fill="#00ff00"/><rect x="298" y="324" width="5" height="2" fill="#00ff00"/><rect x="308" y="315" width="1" height="13" fill="#00ff00"/><rect x="306" y="317" width="5" height="9" fill="#00ff00"/><rect x="307" y="318" width="3" height="7" fill="#000000"/><rect x="316" y="315" width="1" height="7" fill="#00ff00"/><rect x="314" y="317" width="5" height="2" fill="#00ff00"/><rect x="324" y="315" width="1" height="6" fill="#00ff00"/><rect x="322" y="318" width="5" height="1" fill="#00ff00"/><rect x="332" y="318" width="1" height="8" fill="#00ff00"/><rect x="330" y="318" width="5" height="5" fill="#00ff00"/><rect x="331" y="319" width="3" height="3" fill="#ffffff"/><rect x="340" y="311" width="1" height="12" fill="#00ff00"/><rect x="338" y="311" width="5" height="12" fill="#00ff00"/><rect x="339" y="312" width="3" height="10" fill="#000000"/><rect x="348" y="307" width="1" height="12" fill="#00ff00"/><rect x="346" y="312" width="5" height="3" fill="#00ff00"/><rect x="347" y="313" width="3" height="1" fill="#ffffff"/><rect x="356" y="263" width="1" height="52" fill="#00ff00"/><rect x="354" y="277" width="5" height="38" fill="#00ff00"/><rect x="355" y="278" width="3" height="36" fill="#000000"/><rect x="364" y="234" width="1" height="44" fill="#00ff00"/><rect x="362" y="234" width="5" height="44" fill="#00ff00"/><rect x="363" y="235" width="3" height="42" fill="#000000"/><rect x="372" y="167" width="1" height="68" fill="#00ff00"/><rect x="370" y="180" width="5" height="55" fill="#00ff00"/><rect x="371" y="181" width="3" height="53" fill="#000000"/><rect x="380" y="160" width="1" height="30" fill="#00ff00"/><rect x="378" y="171" width="5" height="10" fill="#00ff00"/><rect x="379" y="172" width="3" height="8" fill="#000000"/><rect x="388" y="143" width="1" height="32" fill="#00ff00"/><rect x="386" y="147" width="5" height="25" fill="#00ff00"/><rect x="387" y="148" width="3" height="23" fill="#000000"/><rect x="396" y="125" width="1" height="31" fill="#00ff00"/><rect x="394" y="147" width="5" height="1" fill="#00ff00"/><rect x="404" y="107" width="1" height="48" fill="#00ff00"/><rect x="402" y="122" width="5" height="26" fill="#00ff00"/><rect x="403" y="123" width="3" height="24" fill="#000000"/><rect x="412" y="122" width="1" height="13" fill="#00ff00"/><rect x="410" y="122" width="5" height="3" fill="#00ff00"/><rect x="411" y="123" width="3" height="1" fill="#ffffff"/><rect x="420" y="115" width="1" height="19" fill="#00ff00"/><rect x="418" y="124" width="5" height="8" fill="#00ff00"/><rect x="419" y="125" width="3" height="6" fill="#ffffff"/><rect x="428" y="130" width="1" height="10" fill="#00ff00"/><rect x="426" y="131" width="5" height="2" fill="#00ff00"/><rect x="436" y="120" width="1" height="13" fill="#00ff00"/><rect x="434" y="122" width="5" height="11" fill="#00ff00"/><rect x="435" y="123" width="3" height="9" fill="#000000"/><rect x="444" y="88" width="1" height="39" fill="#00ff00"/><rect x="442" y="111" width="5" height="12" fill="#00ff00"/><rect x="443" y="112" width="3" height="10" fill="#000000"/><rect x="452" y="110" width="1" height="19" fill="#00ff00"/><rect x="450" y="111" width="5" height="17" fill="#00ff00"/><rect x="451" y="112" width="3" height="15" fill="#ffffff"/><rect x="460" y="114" width="1" height="20" fill="#00ff00"/><rect x="458" y="116" width="5" height="12" fill="#00ff00"/><rect x="459" y="117" width="3" height="10" fill="#000000"/><rect x="468" y="96" width="1" height="24" fill="#00ff00"/><rect x="466" y="99" width="5" height="18" fill="#00ff00"/><rect x="467" y="100" width="3" height="16" fill="#000000"/><rect x="476" y="52" width="1" height="49" fill="#00ff00"/><rect x="474" y="67" width="5" height="34" fill="#00ff00"/><rect x="475" y="68" width="3" height="32" fill="#000000"/><rect x="484" y="66" width="1" height="19" fill="#00ff00"/><rect x="482" y="67" width="5" height="17" fill="#00ff00"/><rect x="483" y="68" width="3" height="15" fill="#ffffff"/></g>
<rect x="676" y="78" width="46" height="11" fill="#ffffff"/><rect x="675" y="78" width="1" height="2" fill="#ffffff"/>
<text x="679.6" y="86.5" font-family='"Liberation Sans", sans-serif' font-size="9.8" text-rendering="geometricPrecision" fill="#000000" stroke="#000000" stroke-width="0.12" textLength="37.5" lengthAdjust="spacingAndGlyphs">20932.57</text>
<g clip-path="url(#indclip)">
<polyline points="12.5,413 20.5,424 28.5,449 36.5,479 44.5,511 52.5,540 60.5,540 68.5,530.5 76.5,516.6 84.5,481 92.5,435 100.5,407 108.5,407 116.5,421 124.5,466 132.5,493 140.5,506 148.5,529 156.5,508 164.5,493 172.5,473 180.5,455.5 188.5,450 196.5,481 204.5,519.7 212.5,519.7 220.5,516.6 228.5,482 236.5,435.5 244.5,406.2 252.5,406.2 260.5,410 268.5,412.7 276.5,429.3 284.5,452.4 292.5,489 300.5,526.6 308.5,492 316.5,460.1 324.5,436.2 332.5,436.2 340.5,412 348.5,412.7 356.5,412.7 364.5,411.6 372.5,410.8 380.5,404.7 388.5,400 396.5,400 404.5,400 412.5,400 420.5,403.4 428.5,410 436.5,415.8 444.5,415.8 452.5,435.8 460.5,435.8 468.5,435.8 476.5,415.1 484.5,406.2" fill="none" stroke="#ff0000" stroke-width="2" stroke-linejoin="miter" stroke-linecap="square"/>
<polyline points="12.5,444 20.5,452.4 28.5,462.4 36.5,476.6 44.5,490.4 52.5,504.3 60.5,518.2 68.5,528.6 76.5,528.6 84.5,522.8 92.5,511.5 100.5,497.4 108.5,484.3 116.5,478.9 124.5,485.8 132.5,485.8 140.5,485.8 148.5,480.1 156.5,478.9 164.5,478.1 172.5,477.6 180.5,486.6 188.5,495 196.5,495 204.5,488.9 212.5,483.2 220.5,480.4 228.5,471.5 236.5,458.6 244.5,458.6 252.5,458.2 260.5,456.7 268.5,450.1 276.5,450.6 284.5,454 292.5,447.8 300.5,439.3 308.5,428.5 316.5,420 324.5,415.8 332.5,417.5 340.5,417.8 348.5,416.2 356.5,414.2 364.5,411.6 372.5,407.7 380.5,406.2 388.5,406.2 396.5,406.2 404.5,406.2 412.5,405.9 420.5,405.9 428.5,405.9 436.5,405.9 444.5,403.9 452.5,402.8 460.5,401.6 468.5,400 476.5,398.8 484.5,398.5" fill="none" stroke="#00f0f0" stroke-width="2" stroke-linejoin="miter" stroke-linecap="square"/>
<polyline points="12.5,407.3 20.5,407.3 28.5,408.5 36.5,410.4 44.5,411.3 52.5,413.6 60.5,415.1 68.5,416.2 76.5,417.8 84.5,419.8 92.5,420.6 100.5,421.3 108.5,421.9 116.5,423.9 124.5,427.8 132.5,431.6 140.5,435.2 148.5,438.3 156.5,440.4 164.5,443.2 172.5,446.5 180.5,451.5 188.5,455.5 196.5,460.9 204.5,466.3 212.5,472.7 220.5,478.1 228.5,482.3 236.5,484.3 244.5,485 252.5,486.3 260.5,487.8 268.5,489.7 276.5,492 284.5,485.8 292.5,479.6 300.5,473.5 308.5,465 316.5,457 324.5,451.2 332.5,448.6 340.5,443.2 348.5,437 356.5,433.6 364.5,432.4 372.5,430.1 380.5,428.5 388.5,426.5 396.5,424.7 404.5,421.6 412.5,416.2 420.5,412.7 428.5,411.1 436.5,409.3 444.5,408.5 452.5,407.7 460.5,407.4 468.5,407 476.5,406.5 484.5,405.9" fill="none" stroke="#ffff00" stroke-width="2" stroke-linejoin="miter" stroke-linecap="square"/>
</g>
<g transform="translate(-0.7,0)"><polygon points="299.80,329.40 301.86,334.37 307.22,334.79 303.13,338.28 304.38,343.51 299.80,340.70 295.22,343.51 296.47,338.28 292.38,334.79 297.74,334.37" fill="#3a3ab8"/><path d="M308.1,345 L318,354.9 L318,361.8 L311.1,355 L311.1,369.6 L305.1,369.6 L305.1,355 L298.2,361.8 L298.2,354.9 Z" fill="#3a3ab8"/></g>
<g transform="translate(0.6,0)"><polygon points="299.80,329.40 301.86,334.37 307.22,334.79 303.13,338.28 304.38,343.51 299.80,340.70 295.22,343.51 296.47,338.28 292.38,334.79 297.74,334.37" fill="#b02050"/><path d="M308.1,345 L318,354.9 L318,361.8 L311.1,355 L311.1,369.6 L305.1,369.6 L305.1,355 L298.2,361.8 L298.2,354.9 Z" fill="#b02050"/></g>
<polygon points="299.80,329.40 301.86,334.37 307.22,334.79 303.13,338.28 304.38,343.51 299.80,340.70 295.22,343.51 296.47,338.28 292.38,334.79 297.74,334.37" fill="#ff69b4"/>
<path d="M308.1,345 L318,354.9 L318,361.8 L311.1,355 L311.1,369.6 L305.1,369.6 L305.1,355 L298.2,361.8 L298.2,354.9 Z" fill="#ff69b4"/></svg></body></html>
